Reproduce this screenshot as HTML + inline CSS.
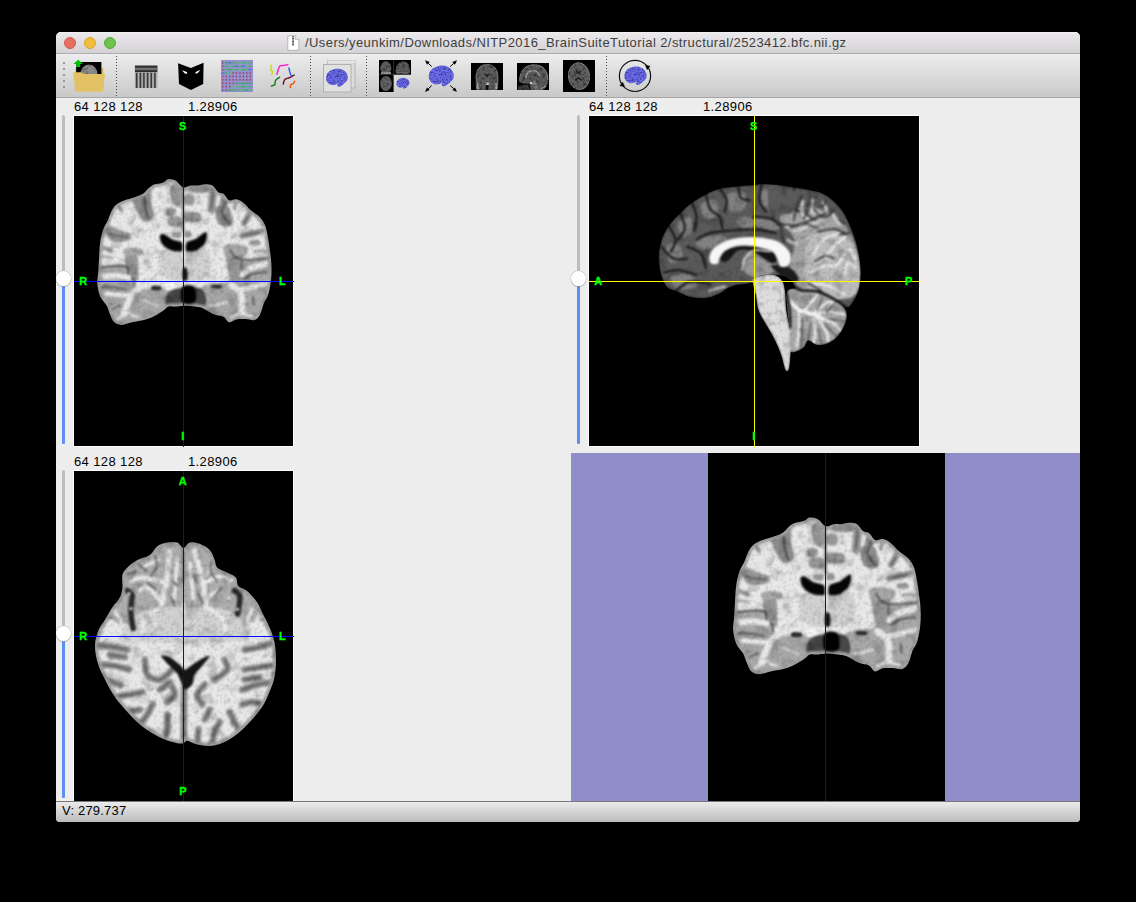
<!DOCTYPE html>
<html><head><meta charset="utf-8">
<style>
html,body{margin:0;padding:0;background:#000;}
body{width:1136px;height:902px;position:relative;overflow:hidden;font-family:"Liberation Sans",sans-serif;font-size:13px;color:#000;}
.abs{position:absolute;}
#win{position:absolute;left:56px;top:32px;width:1024px;height:790px;background:#ededed;border-radius:5px 5px 4px 4px;overflow:hidden;}
#title{position:absolute;left:0;top:0;width:1024px;height:21px;background:linear-gradient(#f4f3f4 0px,#eae8ea 1.5px,#d4d2d4 100%);border-bottom:1px solid #adadad;}
.tl{position:absolute;top:5px;width:12px;height:12px;border-radius:50%;box-sizing:border-box;}
#ttext{position:absolute;left:249px;top:3px;font-size:13px;line-height:15px;color:#3e3e3e;white-space:nowrap;letter-spacing:0.413px;}
#tool{position:absolute;left:0;top:22px;width:1024px;height:43px;background:linear-gradient(#f0f0f0 0px,#ebebeb 2px,#c9c9c9 100%);border-bottom:1px solid #a6a6a6;}
#status{position:absolute;left:0;top:769px;width:1024px;height:21px;background:linear-gradient(#ebebeb,#b9b9b9);border-top:1px solid #777;}
.lbl{position:absolute;font-size:13px;line-height:15px;white-space:nowrap;letter-spacing:0.38px;}
.img{position:absolute;background:#000;}
.groove{position:absolute;width:3px;border-radius:1.5px;background:#bdbdbd;}
.fill{position:absolute;width:3px;border-radius:1.5px;background:#5b8ff0;}
.knob{position:absolute;width:15px;height:15px;border-radius:50%;background:#fff;box-shadow:0 0 0 0.5px #bbb,0 1px 1px rgba(0,0,0,.25);}
.ov{position:absolute;overflow:visible}
.ov text{font-family:"Liberation Sans",sans-serif;font-weight:bold;font-size:11px;fill:#00ff00;stroke:#00ff00;stroke-width:0.3px}
.img{box-shadow:0 0 0 1px #fff;}
</style></head><body>
<svg width="0" height="0" style="position:absolute"><defs>
<filter id="bl" x="-5%" y="-5%" width="110%" height="110%" color-interpolation-filters="sRGB"><feGaussianBlur stdDeviation="0.9" result="b"/><feTurbulence type="fractalNoise" baseFrequency="0.3" numOctaves="2" seed="4" result="n"/><feColorMatrix in="n" type="matrix" values="0.3 0 0 0 0.84  0.3 0 0 0 0.84  0.3 0 0 0 0.84  0 0 0 0 1" result="m"/><feComposite in="b" in2="m" operator="arithmetic" k1="1" k2="0" k3="0" k4="0" result="c1"/><feTurbulence type="fractalNoise" baseFrequency="0.09" numOctaves="2" seed="11" result="n2"/><feColorMatrix in="n2" type="matrix" values="0.55 0 0 0 0.72  0.55 0 0 0 0.72  0.55 0 0 0 0.72  0 0 0 0 1" result="m2"/><feComposite in="c1" in2="m2" operator="arithmetic" k1="1" k2="0" k3="0" k4="0"/></filter>
<filter id="bl2" x="-5%" y="-5%" width="110%" height="110%"><feGaussianBlur stdDeviation="0.8"/></filter>
<g id="cor"><clipPath id="cc"><path d="M109.3 71.4C106.8 70.6 104.4 66.3 102.0 65.0C99.5 63.6 96.8 62.9 94.6 63.1C92.5 63.4 91.6 65.5 89.2 66.4C86.7 67.4 82.4 67.7 80.0 68.6C77.6 69.6 76.4 70.8 74.5 72.3C72.7 73.8 71.5 76.3 69.0 77.8C66.6 79.3 62.9 80.4 59.9 81.4C56.8 82.5 53.5 83.1 50.7 84.2C48.0 85.2 45.6 86.2 43.4 87.8C41.3 89.5 39.6 91.3 37.9 94.2C36.3 97.1 34.9 101.9 33.4 105.2C31.8 108.6 30.0 110.7 28.8 114.4C27.6 118.0 26.7 122.6 26.1 127.2C25.4 131.7 25.4 136.9 25.1 141.8C24.8 146.7 24.5 152.1 24.2 156.4C23.9 160.7 23.0 163.4 23.3 167.4C23.6 171.3 24.5 176.5 26.1 180.2C27.6 183.8 30.8 186.3 32.5 189.3C34.1 192.4 34.9 195.7 36.1 198.5C37.3 201.2 37.9 204.1 39.8 205.8C41.6 207.5 44.0 208.8 47.1 208.9C50.1 209.0 54.4 206.9 58.1 206.2C61.7 205.4 65.4 205.3 69.0 204.3C72.7 203.4 76.7 201.9 80.0 200.3C83.4 198.7 86.7 196.4 89.2 194.8C91.6 193.2 92.5 191.3 94.6 190.6C96.8 189.9 99.5 190.8 102.0 190.6C104.4 190.5 106.5 189.8 109.3 189.7C112.0 189.6 115.7 190.0 118.4 190.2C121.2 190.5 123.6 190.6 125.7 191.2C127.9 191.7 128.8 192.1 131.2 193.4C133.7 194.6 137.3 197.3 140.4 198.5C143.4 199.7 147.1 199.4 149.5 200.7C151.9 202.0 152.9 205.7 155.0 206.2C157.1 206.6 159.6 203.9 162.3 203.4C165.0 202.9 168.4 203.0 171.4 203.0C174.5 203.1 178.2 204.7 180.6 204.0C183.0 203.2 184.6 201.2 186.1 198.5C187.6 195.7 188.4 190.9 189.7 187.5C191.1 184.2 193.1 182.3 194.3 178.4C195.5 174.4 196.5 168.6 197.1 163.7C197.6 158.9 197.6 153.7 197.4 149.1C197.3 144.5 196.7 140.6 196.1 136.3C195.6 132.0 195.1 127.8 194.3 123.5C193.5 119.2 192.9 114.4 191.6 110.7C190.2 107.0 188.5 104.3 186.1 101.5C183.6 98.8 179.7 96.7 176.9 94.2C174.2 91.8 172.1 88.7 169.6 86.9C167.2 85.1 164.7 83.7 162.3 83.3C159.9 82.8 157.1 85.1 155.0 84.2C152.9 83.3 151.3 79.1 149.5 77.8C147.7 76.4 145.8 77.3 144.0 75.9C142.2 74.6 140.7 70.8 138.5 69.5C136.4 68.3 133.7 68.3 131.2 68.3C128.8 68.3 126.3 69.3 123.9 69.5C121.5 69.8 119.0 69.2 116.6 69.5C114.1 69.8 111.7 72.1 109.3 71.4Z"/></clipPath>
<g clip-path="url(#cc)" filter="url(#bl)">
<path d="M109.3 71.4C106.8 70.6 104.4 66.3 102.0 65.0C99.5 63.6 96.8 62.9 94.6 63.1C92.5 63.4 91.6 65.5 89.2 66.4C86.7 67.4 82.4 67.7 80.0 68.6C77.6 69.6 76.4 70.8 74.5 72.3C72.7 73.8 71.5 76.3 69.0 77.8C66.6 79.3 62.9 80.4 59.9 81.4C56.8 82.5 53.5 83.1 50.7 84.2C48.0 85.2 45.6 86.2 43.4 87.8C41.3 89.5 39.6 91.3 37.9 94.2C36.3 97.1 34.9 101.9 33.4 105.2C31.8 108.6 30.0 110.7 28.8 114.4C27.6 118.0 26.7 122.6 26.1 127.2C25.4 131.7 25.4 136.9 25.1 141.8C24.8 146.7 24.5 152.1 24.2 156.4C23.9 160.7 23.0 163.4 23.3 167.4C23.6 171.3 24.5 176.5 26.1 180.2C27.6 183.8 30.8 186.3 32.5 189.3C34.1 192.4 34.9 195.7 36.1 198.5C37.3 201.2 37.9 204.1 39.8 205.8C41.6 207.5 44.0 208.8 47.1 208.9C50.1 209.0 54.4 206.9 58.1 206.2C61.7 205.4 65.4 205.3 69.0 204.3C72.7 203.4 76.7 201.9 80.0 200.3C83.4 198.7 86.7 196.4 89.2 194.8C91.6 193.2 92.5 191.3 94.6 190.6C96.8 189.9 99.5 190.8 102.0 190.6C104.4 190.5 106.5 189.8 109.3 189.7C112.0 189.6 115.7 190.0 118.4 190.2C121.2 190.5 123.6 190.6 125.7 191.2C127.9 191.7 128.8 192.1 131.2 193.4C133.7 194.6 137.3 197.3 140.4 198.5C143.4 199.7 147.1 199.4 149.5 200.7C151.9 202.0 152.9 205.7 155.0 206.2C157.1 206.6 159.6 203.9 162.3 203.4C165.0 202.9 168.4 203.0 171.4 203.0C174.5 203.1 178.2 204.7 180.6 204.0C183.0 203.2 184.6 201.2 186.1 198.5C187.6 195.7 188.4 190.9 189.7 187.5C191.1 184.2 193.1 182.3 194.3 178.4C195.5 174.4 196.5 168.6 197.1 163.7C197.6 158.9 197.6 153.7 197.4 149.1C197.3 144.5 196.7 140.6 196.1 136.3C195.6 132.0 195.1 127.8 194.3 123.5C193.5 119.2 192.9 114.4 191.6 110.7C190.2 107.0 188.5 104.3 186.1 101.5C183.6 98.8 179.7 96.7 176.9 94.2C174.2 91.8 172.1 88.7 169.6 86.9C167.2 85.1 164.7 83.7 162.3 83.3C159.9 82.8 157.1 85.1 155.0 84.2C152.9 83.3 151.3 79.1 149.5 77.8C147.7 76.4 145.8 77.3 144.0 75.9C142.2 74.6 140.7 70.8 138.5 69.5C136.4 68.3 133.7 68.3 131.2 68.3C128.8 68.3 126.3 69.3 123.9 69.5C121.5 69.8 119.0 69.2 116.6 69.5C114.1 69.8 111.7 72.1 109.3 71.4Z" fill="#e8e8e8"/>
<path d="M88.2 134.5C91.9 131.4 104.1 129.9 107.4 134.5C110.8 139.0 110.2 157.0 108.4 161.9C106.5 166.8 100.3 165.3 96.5 163.7C92.7 162.2 86.9 157.6 85.5 152.8C84.1 147.9 84.6 137.5 88.2 134.5Z" fill="#d2d2d2"/>
<path d="M112.9 134.5C116.3 129.9 129.1 131.4 133.0 134.5C137.0 137.5 137.9 147.9 136.7 152.8C135.5 157.6 129.7 162.2 125.7 163.7C121.8 165.3 115.1 166.8 112.9 161.9C110.8 157.0 109.6 139.0 112.9 134.5Z" fill="#d2d2d2"/>
<path d="M24.6 151.7C29.3 149.3 45.8 149.4 51.1 150.9C56.4 152.4 54.3 157.2 56.4 160.6C58.5 164.0 61.8 169.2 63.5 171.2C65.3 173.3 61.7 172.8 67.0 173.1C72.3 173.4 90.3 171.3 95.4 173.1C100.4 174.8 97.8 180.6 97.2 183.7C96.6 186.7 94.2 188.6 91.9 191.5C89.5 194.5 86.1 198.7 83.1 201.4C80.2 204.1 78.6 206.3 74.2 207.6C69.7 208.9 62.0 209.1 56.4 209.3C50.8 209.4 44.2 210.7 40.5 208.5C36.8 206.3 36.7 200.9 34.3 196.1C31.9 191.3 28.2 185.2 26.2 180.0C24.3 174.8 23.0 169.7 22.8 165.0C22.5 160.3 19.9 154.0 24.6 151.7Z" fill="#a8a8a8"/>
<path d="M155.9 165.0C161.7 161.9 160.0 156.1 162.3 152.8C164.7 149.4 164.3 146.5 170.0 144.9C175.7 143.2 192.0 138.8 196.7 142.9C201.4 147.0 198.6 162.0 198.0 169.4C197.4 176.8 194.7 182.1 193.0 187.1C191.3 192.2 190.1 196.6 187.7 199.6C185.4 202.5 183.4 204.1 178.9 204.9C174.5 205.6 165.4 203.5 161.2 204.0C157.1 204.4 157.8 208.7 154.1 207.6C150.4 206.6 143.3 200.5 139.1 197.7C134.8 194.9 130.4 195.2 128.5 190.8C126.6 186.4 123.0 175.5 127.6 171.2C132.1 166.9 150.1 168.1 155.9 165.0Z" fill="#a8a8a8"/>
<path d="M51.7 139.2C53.3 136.8 60.6 136.5 62.6 138.5C64.7 140.4 63.7 146.7 63.9 150.9C64.1 155.1 65.0 161.6 63.9 163.7C62.8 165.9 59.0 165.6 57.1 163.7C55.3 161.9 53.5 156.8 52.6 152.8C51.7 148.7 50.0 141.6 51.7 139.2Z" fill="#969696"/>
<path d="M151.7 130.8C154.1 128.1 164.9 129.6 167.8 132.6C170.7 135.7 169.3 143.9 169.3 149.1C169.3 154.3 169.9 161.1 167.8 163.7C165.7 166.3 159.3 167.1 156.8 164.6C154.4 162.2 154.0 154.7 153.2 149.1C152.3 143.5 149.3 133.6 151.7 130.8Z" fill="#969696"/>
<path d="M51.1 132.6C53.8 131.6 64.4 131.6 67.0 132.6C69.7 133.7 69.7 137.8 67.0 138.9C64.4 139.9 53.8 139.9 51.1 138.9C48.5 137.8 48.5 133.7 51.1 132.6Z" fill="#a8a8a8"/>
<path d="M151.3 129.0C154.6 127.5 168.5 128.3 171.8 129.9C175.2 131.5 174.7 137.4 171.4 138.9C168.2 140.4 155.6 140.5 152.2 138.9C148.9 137.2 148.1 130.5 151.3 129.0Z" fill="#a8a8a8"/>
<path d="M57.7 81.4C58.8 79.1 63.2 76.0 66.3 74.5C69.3 73.0 74.2 70.4 76.0 72.3C77.8 74.1 76.7 80.7 77.3 85.6C77.9 90.6 80.8 98.6 79.6 101.9C78.5 105.2 72.8 106.4 70.1 105.6C67.5 104.8 65.6 100.0 63.9 97.2C62.2 94.4 60.9 91.4 59.9 88.7C58.9 86.1 56.6 83.8 57.7 81.4Z" fill="#8c8c8c"/>
<path d="M70.1 75.9C70.3 78.4 70.6 86.2 71.2 90.6C71.9 95.0 73.7 100.3 74.2 102.3" fill="none" stroke="#484848" stroke-width="2" stroke-linecap="round" stroke-linejoin="round"/>
<path d="M32.8 108.9C34.8 108.2 39.5 111.3 43.4 112.9C47.4 114.5 54.7 116.5 56.6 118.4C58.5 120.3 57.8 123.1 54.8 124.2C51.7 125.4 42.2 126.5 38.3 125.3C34.5 124.1 32.6 119.8 31.7 117.1C30.8 114.4 30.9 109.6 32.8 108.9Z" fill="#969696"/>
<path d="M35.2 118.0C36.9 118.4 42.2 119.7 45.3 120.2C48.3 120.7 52.1 120.7 53.5 120.8" fill="none" stroke="#484848" stroke-width="1.3" stroke-linecap="round" stroke-linejoin="round"/>
<path d="M97.4 69.5C99.0 68.0 104.4 65.4 106.0 68.6C107.6 71.8 108.1 85.5 106.9 88.7C105.7 91.9 100.4 89.7 98.7 87.8C96.9 86.0 96.7 80.8 96.5 77.8C96.3 74.7 95.8 71.1 97.4 69.5Z" fill="#969696"/>
<path d="M91.9 93.3C93.1 92.0 98.5 91.1 100.1 92.0C101.7 93.0 102.6 97.5 101.4 98.8C100.2 100.1 94.4 100.6 92.8 99.7C91.2 98.8 90.7 94.6 91.9 93.3Z" fill="#969696"/>
<path d="M94.6 101.9C96.5 100.4 104.3 99.4 106.3 100.8C108.4 102.2 108.8 108.8 106.9 110.3C105.0 111.8 97.0 111.2 95.0 109.8C93.0 108.4 92.7 103.4 94.6 101.9Z" fill="#969696"/>
<path d="M99.0 116.5C100.2 115.7 105.3 115.4 106.5 116.2C107.8 117.0 107.7 120.5 106.5 121.3C105.3 122.1 100.6 121.9 99.4 121.1C98.1 120.3 97.8 117.4 99.0 116.5Z" fill="#969696"/>
<path d="M43.4 88.7C44.1 89.7 46.8 93.6 47.5 94.6" fill="none" stroke="#969696" stroke-width="3.5" stroke-linecap="round" stroke-linejoin="round"/>
<path d="M27.0 130.8C28.6 131.4 35.4 133.9 37.0 134.5" fill="none" stroke="#969696" stroke-width="4" stroke-linecap="round" stroke-linejoin="round"/>
<path d="M27.0 140.0C28.8 140.3 36.1 141.5 37.9 141.8" fill="none" stroke="#b0b0b0" stroke-width="3" stroke-linecap="round" stroke-linejoin="round"/>
<path d="M115.7 68.6C119.2 67.4 134.4 67.8 138.2 69.0C141.9 70.2 141.7 74.5 138.2 75.8C134.6 77.0 120.5 77.5 116.8 76.3C113.0 75.1 112.1 69.8 115.7 68.6Z" fill="#969696"/>
<path d="M110.7 79.4C112.2 78.0 118.0 78.0 119.5 79.4C121.0 80.9 121.0 86.7 119.5 88.2C118.0 89.7 112.2 89.7 110.7 88.2C109.3 86.7 109.3 80.9 110.7 79.4Z" fill="#969696"/>
<path d="M110.7 96.2C113.2 94.9 123.3 95.5 125.7 97.0C128.2 98.4 127.9 103.7 125.4 105.0C122.9 106.4 113.2 106.5 110.7 105.0C108.3 103.6 108.2 97.6 110.7 96.2Z" fill="#969696"/>
<path d="M110.7 115.6C111.7 114.7 115.8 114.7 116.8 115.6C117.8 116.5 117.8 120.2 116.8 121.1C115.8 122.0 111.7 122.0 110.7 121.1C109.7 120.2 109.7 116.5 110.7 115.6Z" fill="#969696"/>
<path d="M139.1 74.1C138.9 75.8 138.5 81.0 138.2 84.2C137.9 87.4 137.4 91.8 137.3 93.3" fill="none" stroke="#969696" stroke-width="8" stroke-linecap="round" stroke-linejoin="round"/>
<path d="M139.1 75.0C138.9 76.6 138.5 81.2 138.2 84.2C137.9 87.1 137.4 91.2 137.3 92.6" fill="none" stroke="#484848" stroke-width="1.3" stroke-linecap="round" stroke-linejoin="round"/>
<path d="M152.8 77.8C152.2 79.6 150.3 85.7 149.5 88.7C148.7 91.8 148.1 95.0 147.9 96.2" fill="none" stroke="#969696" stroke-width="8" stroke-linecap="round" stroke-linejoin="round"/>
<path d="M142.2 91.5C144.0 89.4 150.5 88.0 153.2 89.7C155.8 91.3 157.5 98.2 158.3 101.5C159.0 104.9 159.7 108.5 157.7 109.8C155.8 111.1 149.4 110.5 146.8 109.2C144.2 107.9 143.0 104.9 142.2 101.9C141.4 99.0 140.4 93.5 142.2 91.5Z" fill="#8c8c8c"/>
<path d="M153.2 80.5C152.6 82.0 150.7 86.9 149.9 89.7C149.0 92.4 147.2 94.1 148.0 97.0C148.9 99.9 153.8 105.4 155.0 107.0" fill="none" stroke="#484848" stroke-width="1.4" stroke-linecap="round" stroke-linejoin="round"/>
<path d="M175.1 98.8C174.3 100.2 170.8 106.0 170.0 107.4" fill="none" stroke="#969696" stroke-width="6" stroke-linecap="round" stroke-linejoin="round"/>
<path d="M174.4 100.6C173.6 101.7 170.7 105.8 170.0 106.9" fill="none" stroke="#484848" stroke-width="1.2" stroke-linecap="round" stroke-linejoin="round"/>
<path d="M187.0 115.4C185.3 115.9 180.1 117.2 176.9 118.0C173.8 118.8 169.6 119.7 168.2 120.0" fill="none" stroke="#969696" stroke-width="6" stroke-linecap="round" stroke-linejoin="round"/>
<path d="M185.2 116.2C182.7 116.7 173.0 118.9 170.5 119.5" fill="none" stroke="#484848" stroke-width="1.1" stroke-linecap="round" stroke-linejoin="round"/>
<path d="M176.2 124.6C177.7 123.9 183.7 123.9 185.2 124.6C186.7 125.3 186.7 128.3 185.2 129.0C183.7 129.7 177.7 129.7 176.2 129.0C174.7 128.3 174.7 125.3 176.2 124.6Z" fill="#969696"/>
<path d="M162.3 83.3C162.0 84.8 160.8 90.9 160.5 92.4" fill="none" stroke="#969696" stroke-width="3.5" stroke-linecap="round" stroke-linejoin="round"/>
<path d="M190.7 134.5C189.0 134.6 182.3 135.2 180.6 135.4" fill="none" stroke="#b0b0b0" stroke-width="3" stroke-linecap="round" stroke-linejoin="round"/>
<path d="M109.3 71.4C109.2 74.6 109.1 83.3 109.1 90.6C109.1 97.9 109.2 111.2 109.3 115.3" fill="none" stroke="#484848" stroke-width="1.5" stroke-linecap="round" stroke-linejoin="round"/>
<path d="M26.2 150.9C30.4 150.8 46.4 148.7 51.1 150.0C55.9 151.3 53.3 156.6 54.8 158.8C56.3 161.0 59.2 161.4 60.1 163.2C61.0 164.9 60.1 168.4 60.1 169.4" fill="none" stroke="#484848" stroke-width="1.6" stroke-linecap="round" stroke-linejoin="round"/>
<path d="M155.9 133.9C156.8 135.1 158.9 139.4 161.2 141.1C163.6 142.7 164.1 143.6 170.0 143.8C175.9 143.9 192.2 142.3 196.7 142.0" fill="none" stroke="#484848" stroke-width="1.6" stroke-linecap="round" stroke-linejoin="round"/>
<path d="M167.8 145.4C167.7 146.7 167.5 151.5 167.4 152.8" fill="none" stroke="#484848" stroke-width="1.4" stroke-linecap="round" stroke-linejoin="round"/>
<path d="M65.4 171.2C64.2 172.4 60.2 175.7 58.2 178.4C56.3 181.0 55.2 183.9 53.9 187.1C52.5 190.4 50.8 196.0 50.2 197.7" fill="none" stroke="#e8e8e8" stroke-width="6.5" stroke-linecap="round" stroke-linejoin="round"/>
<path d="M56.4 180.0C54.2 179.7 47.4 178.8 43.2 178.4C39.1 177.9 33.6 177.6 31.7 177.4" fill="none" stroke="#e8e8e8" stroke-width="4.5" stroke-linecap="round" stroke-linejoin="round"/>
<path d="M54.8 161.5C52.9 161.2 47.4 159.9 43.2 159.7C39.1 159.6 32.1 160.5 29.9 160.6" fill="none" stroke="#e8e8e8" stroke-width="5.5" stroke-linecap="round" stroke-linejoin="round"/>
<path d="M50.2 197.7C49.0 198.8 44.4 202.9 43.2 204.0" fill="none" stroke="#e8e8e8" stroke-width="3" stroke-linecap="round" stroke-linejoin="round"/>
<path d="M54.8 196.1C55.8 196.8 58.2 199.2 60.8 200.5C63.5 201.8 69.0 203.4 70.7 204.0" fill="none" stroke="#e8e8e8" stroke-width="3" stroke-linecap="round" stroke-linejoin="round"/>
<path d="M65.4 183.7C67.5 184.2 74.6 185.8 77.8 187.1C81.0 188.4 83.6 190.8 84.8 191.5" fill="none" stroke="#dcdcdc" stroke-width="1.6" stroke-linecap="round" stroke-linejoin="round"/>
<path d="M27.0 171.0C29.1 171.0 35.5 170.6 39.8 171.0C44.0 171.5 50.4 173.3 52.6 173.8" fill="none" stroke="#484848" stroke-width="1.2" stroke-linecap="round" stroke-linejoin="round"/>
<path d="M37.9 193.0C39.5 192.4 45.6 189.9 47.1 189.3" fill="none" stroke="#484848" stroke-width="1.2" stroke-linecap="round" stroke-linejoin="round"/>
<path d="M77.8 170.3C79.3 169.7 85.1 169.7 86.6 170.3C88.1 170.9 88.1 173.4 86.6 174.0C85.1 174.6 79.3 174.6 77.8 174.0C76.4 173.4 76.4 170.9 77.8 170.3Z" fill="#2a2a2a"/>
<path d="M168.3 158.8C169.5 157.8 172.1 154.2 175.3 152.6C178.5 151.0 184.5 150.0 187.7 149.1C191.0 148.2 193.7 147.6 194.9 147.3" fill="none" stroke="#e8e8e8" stroke-width="5.5" stroke-linecap="round" stroke-linejoin="round"/>
<path d="M170.0 163.2C171.5 162.3 175.2 159.0 178.9 157.9C182.7 156.7 190.1 156.5 192.3 156.2" fill="none" stroke="#484848" stroke-width="1.5" stroke-linecap="round" stroke-linejoin="round"/>
<path d="M157.6 169.4C158.7 170.3 162.9 172.3 164.7 174.7C166.5 177.1 167.9 180.1 168.3 183.7C168.8 187.2 167.6 194.0 167.4 196.1" fill="none" stroke="#e8e8e8" stroke-width="6.5" stroke-linecap="round" stroke-linejoin="round"/>
<path d="M164.7 174.0C167.1 173.5 174.2 172.3 178.9 171.2C183.7 170.2 190.7 168.3 193.0 167.8" fill="none" stroke="#e8e8e8" stroke-width="4.8" stroke-linecap="round" stroke-linejoin="round"/>
<path d="M167.4 196.1C165.8 197.0 159.2 200.5 157.6 201.4" fill="none" stroke="#e8e8e8" stroke-width="3" stroke-linecap="round" stroke-linejoin="round"/>
<path d="M170.0 197.7C171.5 198.4 177.5 200.8 178.9 201.4" fill="none" stroke="#e8e8e8" stroke-width="3" stroke-linecap="round" stroke-linejoin="round"/>
<path d="M178.9 180.9C179.1 182.3 179.7 187.6 179.9 189.0" fill="none" stroke="#484848" stroke-width="1.5" stroke-linecap="round" stroke-linejoin="round"/>
<path d="M135.8 189.7C137.2 189.5 141.1 189.3 144.0 188.6C146.9 187.9 151.6 186.2 153.2 185.7" fill="none" stroke="#e0e0e0" stroke-width="2.4" stroke-linecap="round" stroke-linejoin="round"/>
<path d="M138.2 169.4C139.6 168.9 145.5 168.9 146.9 169.4C148.4 169.9 148.4 171.7 146.9 172.1C145.5 172.6 139.6 172.6 138.2 172.1C136.7 171.7 136.7 169.9 138.2 169.4Z" fill="#2a2a2a"/>
<path d="M91.9 166.8C94.3 165.6 103.8 165.6 106.2 166.8C108.5 168.0 108.5 172.8 106.2 174.0C103.8 175.2 94.3 175.2 91.9 174.0C89.5 172.8 89.5 168.0 91.9 166.8Z" fill="#f6f6f6"/>
<path d="M112.9 166.8C115.1 165.8 123.6 165.8 125.7 166.8C127.9 167.8 127.9 171.9 125.7 172.9C123.6 173.9 115.1 173.9 112.9 172.9C110.8 171.9 110.8 167.8 112.9 166.8Z" fill="#f0f0f0"/>
<path d="M96.5 174.7C102.0 171.3 122.2 169.8 127.6 172.9C132.9 175.9 134.0 189.6 128.5 193.0C123.0 196.3 100.0 196.0 94.6 193.0C89.3 189.9 91.0 178.1 96.5 174.7Z" fill="#484848"/>
<path d="M109.3 71.4C106.8 70.6 104.4 66.3 102.0 65.0C99.5 63.6 96.8 62.9 94.6 63.1C92.5 63.4 91.6 65.5 89.2 66.4C86.7 67.4 82.4 67.7 80.0 68.6C77.6 69.6 76.4 70.8 74.5 72.3C72.7 73.8 71.5 76.3 69.0 77.8C66.6 79.3 62.9 80.4 59.9 81.4C56.8 82.5 53.5 83.1 50.7 84.2C48.0 85.2 45.6 86.2 43.4 87.8C41.3 89.5 39.6 91.3 37.9 94.2C36.3 97.1 34.9 101.9 33.4 105.2C31.8 108.6 30.0 110.7 28.8 114.4C27.6 118.0 26.7 122.6 26.1 127.2C25.4 131.7 25.4 136.9 25.1 141.8C24.8 146.7 24.5 152.1 24.2 156.4C23.9 160.7 23.0 163.4 23.3 167.4C23.6 171.3 24.5 176.5 26.1 180.2C27.6 183.8 30.8 186.3 32.5 189.3C34.1 192.4 34.9 195.7 36.1 198.5C37.3 201.2 37.9 204.1 39.8 205.8C41.6 207.5 44.0 208.8 47.1 208.9C50.1 209.0 54.4 206.9 58.1 206.2C61.7 205.4 65.4 205.3 69.0 204.3C72.7 203.4 76.7 201.9 80.0 200.3C83.4 198.7 86.7 196.4 89.2 194.8C91.6 193.2 92.5 191.3 94.6 190.6C96.8 189.9 99.5 190.8 102.0 190.6C104.4 190.5 106.5 189.8 109.3 189.7C112.0 189.6 115.7 190.0 118.4 190.2C121.2 190.5 123.6 190.6 125.7 191.2C127.9 191.7 128.8 192.1 131.2 193.4C133.7 194.6 137.3 197.3 140.4 198.5C143.4 199.7 147.1 199.4 149.5 200.7C151.9 202.0 152.9 205.7 155.0 206.2C157.1 206.6 159.6 203.9 162.3 203.4C165.0 202.9 168.4 203.0 171.4 203.0C174.5 203.1 178.2 204.7 180.6 204.0C183.0 203.2 184.6 201.2 186.1 198.5C187.6 195.7 188.4 190.9 189.7 187.5C191.1 184.2 193.1 182.3 194.3 178.4C195.5 174.4 196.5 168.6 197.1 163.7C197.6 158.9 197.6 153.7 197.4 149.1C197.3 144.5 196.7 140.6 196.1 136.3C195.6 132.0 195.1 127.8 194.3 123.5C193.5 119.2 192.9 114.4 191.6 110.7C190.2 107.0 188.5 104.3 186.1 101.5C183.6 98.8 179.7 96.7 176.9 94.2C174.2 91.8 172.1 88.7 169.6 86.9C167.2 85.1 164.7 83.7 162.3 83.3C159.9 82.8 157.1 85.1 155.0 84.2C152.9 83.3 151.3 79.1 149.5 77.8C147.7 76.4 145.8 77.3 144.0 75.9C142.2 74.6 140.7 70.8 138.5 69.5C136.4 68.3 133.7 68.3 131.2 68.3C128.8 68.3 126.3 69.3 123.9 69.5C121.5 69.8 119.0 69.2 116.6 69.5C114.1 69.8 111.7 72.1 109.3 71.4Z" fill="none" stroke="#a2a2a2" stroke-width="6"/>
<path d="M86.0 119.1C86.3 118.4 88.3 117.6 89.5 118.0C90.7 118.4 96.5 122.7 98.3 123.5C100.1 124.3 106.8 125.3 107.8 126.4C108.8 127.6 108.9 134.4 108.0 135.2C107.0 136.0 100.0 135.3 98.3 134.8C96.6 134.4 91.8 131.8 90.6 130.8C89.4 129.9 87.0 126.5 86.6 125.3C86.1 124.2 85.8 119.8 86.0 119.1Z" fill="#050505"/>
<path d="M132.7 116.2C132.3 115.7 130.4 116.6 129.4 117.3C128.3 117.9 123.8 121.8 122.1 122.8C120.4 123.7 113.5 125.2 112.6 126.4C111.6 127.7 111.4 134.4 112.4 135.2C113.3 136.0 120.3 135.5 122.1 134.8C123.8 134.2 128.7 130.2 129.8 129.0C130.8 127.7 132.4 123.7 132.7 122.4C133.0 121.1 133.0 116.7 132.7 116.2Z" fill="#050505"/>
<path d="M108.9 152.8C109.6 150.9 112.2 150.9 112.9 152.8C113.7 154.6 114.0 161.9 113.3 163.7C112.6 165.6 109.6 165.6 108.9 163.7C108.2 161.9 108.2 154.6 108.9 152.8Z" fill="#111"/>
<path d="M108.4 171.0C110.3 168.5 118.1 168.6 120.2 171.0C122.4 173.5 123.1 183.1 121.2 185.7C119.2 188.3 110.5 189.0 108.4 186.6C106.2 184.2 106.4 173.6 108.4 171.0Z" fill="#000"/>
</g></g>
<g id="axi"><clipPath id="ca"><path d="M109.5 77.0C111.6 77.0 113.0 72.2 115.7 71.5C118.4 70.8 122.4 71.5 125.7 72.7C129.0 74.0 133.2 76.2 135.7 79.0C138.2 81.7 139.4 86.0 140.7 88.9C141.9 91.8 141.1 94.3 143.2 96.4C145.2 98.5 150.0 99.7 153.1 101.4C156.3 103.1 160.0 104.1 161.9 106.4C163.7 108.7 162.5 112.8 164.4 115.1C166.2 117.4 170.0 117.4 173.1 120.1C176.2 122.8 180.4 127.4 183.1 131.3C185.8 135.3 187.2 139.6 189.3 143.8C191.4 147.9 193.7 151.7 195.5 156.3C197.4 160.8 199.4 165.8 200.5 171.2C201.6 176.6 202.0 182.9 202.0 188.7C202.0 194.5 201.6 200.7 200.5 206.1C199.4 211.5 197.6 216.1 195.5 221.1C193.5 226.1 191.0 231.5 188.1 236.1C185.1 240.6 181.8 244.4 178.1 248.5C174.3 252.7 169.8 257.5 165.6 261.0C161.5 264.5 157.7 267.4 153.1 269.7C148.6 272.0 143.2 274.1 138.2 274.7C133.2 275.3 127.4 274.3 123.2 273.5C119.1 272.6 115.5 269.9 113.2 269.7C111.0 269.5 111.2 271.8 109.5 272.2C107.8 272.6 106.4 272.8 103.3 272.2C100.2 271.6 95.0 270.1 90.8 268.5C86.6 266.8 82.5 264.7 78.3 262.2C74.2 259.7 70.0 257.0 65.9 253.5C61.7 250.0 57.6 245.6 53.4 241.0C49.2 236.5 44.7 231.5 40.9 226.1C37.2 220.7 33.9 214.4 31.0 208.6C28.0 202.8 25.1 197.0 23.5 191.2C21.8 185.4 20.8 179.1 21.0 173.7C21.2 168.3 23.1 162.9 24.7 158.8C26.4 154.6 28.7 152.5 31.0 148.8C33.2 145.0 35.9 140.0 38.4 136.3C40.9 132.6 44.3 129.7 45.9 126.3C47.6 123.0 48.0 120.1 48.4 116.4C48.8 112.6 47.6 107.2 48.4 103.9C49.2 100.6 50.9 98.9 53.4 96.4C55.9 93.9 59.6 91.0 63.4 88.9C67.1 86.8 72.5 86.2 75.8 83.9C79.2 81.7 80.4 77.3 83.3 75.2C86.2 73.1 90.0 72.1 93.3 71.5C96.6 70.8 100.6 70.6 103.3 71.5C106.0 72.4 107.4 77.0 109.5 77.0Z"/></clipPath>
<g clip-path="url(#ca)" filter="url(#bl)">
<path d="M109.5 77.0C111.6 77.0 113.0 72.2 115.7 71.5C118.4 70.8 122.4 71.5 125.7 72.7C129.0 74.0 133.2 76.2 135.7 79.0C138.2 81.7 139.4 86.0 140.7 88.9C141.9 91.8 141.1 94.3 143.2 96.4C145.2 98.5 150.0 99.7 153.1 101.4C156.3 103.1 160.0 104.1 161.9 106.4C163.7 108.7 162.5 112.8 164.4 115.1C166.2 117.4 170.0 117.4 173.1 120.1C176.2 122.8 180.4 127.4 183.1 131.3C185.8 135.3 187.2 139.6 189.3 143.8C191.4 147.9 193.7 151.7 195.5 156.3C197.4 160.8 199.4 165.8 200.5 171.2C201.6 176.6 202.0 182.9 202.0 188.7C202.0 194.5 201.6 200.7 200.5 206.1C199.4 211.5 197.6 216.1 195.5 221.1C193.5 226.1 191.0 231.5 188.1 236.1C185.1 240.6 181.8 244.4 178.1 248.5C174.3 252.7 169.8 257.5 165.6 261.0C161.5 264.5 157.7 267.4 153.1 269.7C148.6 272.0 143.2 274.1 138.2 274.7C133.2 275.3 127.4 274.3 123.2 273.5C119.1 272.6 115.5 269.9 113.2 269.7C111.0 269.5 111.2 271.8 109.5 272.2C107.8 272.6 106.4 272.8 103.3 272.2C100.2 271.6 95.0 270.1 90.8 268.5C86.6 266.8 82.5 264.7 78.3 262.2C74.2 259.7 70.0 257.0 65.9 253.5C61.7 250.0 57.6 245.6 53.4 241.0C49.2 236.5 44.7 231.5 40.9 226.1C37.2 220.7 33.9 214.4 31.0 208.6C28.0 202.8 25.1 197.0 23.5 191.2C21.8 185.4 20.8 179.1 21.0 173.7C21.2 168.3 23.1 162.9 24.7 158.8C26.4 154.6 28.7 152.5 31.0 148.8C33.2 145.0 35.9 140.0 38.4 136.3C40.9 132.6 44.3 129.7 45.9 126.3C47.6 123.0 48.0 120.1 48.4 116.4C48.8 112.6 47.6 107.2 48.4 103.9C49.2 100.6 50.9 98.9 53.4 96.4C55.9 93.9 59.6 91.0 63.4 88.9C67.1 86.8 72.5 86.2 75.8 83.9C79.2 81.7 80.4 77.3 83.3 75.2C86.2 73.1 90.0 72.1 93.3 71.5C96.6 70.8 100.6 70.6 103.3 71.5C106.0 72.4 107.4 77.0 109.5 77.0Z" fill="#e8e8e8"/>
<path d="M44.8 90.9C50.6 83.5 70.4 75.4 81.2 71.9C92.0 68.5 99.9 70.1 109.4 70.3C118.9 70.6 129.2 68.0 138.3 73.5C147.3 79.1 156.8 94.6 163.6 103.6C170.5 112.6 176.3 120.3 179.5 127.4C182.6 134.5 185.3 142.2 182.6 146.4C180.0 150.6 175.8 154.1 163.6 152.7C151.5 151.4 127.7 138.5 109.7 138.5C91.8 138.5 68.0 151.4 55.9 152.7C43.7 154.1 39.5 150.6 36.8 146.4C34.2 142.2 38.4 132.4 40.0 127.4C41.6 122.4 45.6 122.4 46.4 116.3C47.1 110.2 39.0 98.3 44.8 90.9Z" fill="#aeaeae"/>
<path d="M68.5 140.1C78.1 134.7 95.2 136.1 109.7 136.1C124.3 136.1 145.9 134.7 155.7 140.1C165.5 145.5 185.6 163.8 168.4 168.6C151.2 173.4 69.3 173.4 52.7 168.6C36.1 163.8 59.0 145.5 68.5 140.1Z" fill="#d2d2d2"/>
<path d="M95.5 79.8C95.0 85.1 93.6 102.3 92.3 111.5C91.0 120.8 88.4 131.4 87.6 135.3" fill="none" stroke="#e8e8e8" stroke-width="5.4" stroke-linecap="round" stroke-linejoin="round"/>
<path d="M120.8 79.8C122.2 85.1 126.9 102.3 128.8 111.5C130.6 120.8 131.4 131.4 131.9 135.3" fill="none" stroke="#e8e8e8" stroke-width="5.4" stroke-linecap="round" stroke-linejoin="round"/>
<path d="M103.4 87.8C102.9 94.4 100.8 120.8 100.2 127.4" fill="none" stroke="#e8e8e8" stroke-width="3.8" stroke-linecap="round" stroke-linejoin="round"/>
<path d="M116.1 92.5C116.6 98.3 118.7 121.6 119.3 127.4" fill="none" stroke="#e8e8e8" stroke-width="3.8" stroke-linecap="round" stroke-linejoin="round"/>
<path d="M92.3 111.5C88.4 110.8 74.4 107.1 68.5 106.8C62.7 106.5 59.3 109.4 57.5 110.0" fill="none" stroke="#e8e8e8" stroke-width="4.4" stroke-linecap="round" stroke-linejoin="round"/>
<path d="M87.6 130.6C85.2 128.2 77.0 118.1 73.3 116.3C69.6 114.4 66.7 118.9 65.4 119.5" fill="none" stroke="#e8e8e8" stroke-width="4.2" stroke-linecap="round" stroke-linejoin="round"/>
<path d="M130.4 111.5C133.3 110.5 143.3 105.7 147.8 105.2C152.3 104.7 155.7 107.8 157.3 108.4" fill="none" stroke="#e8e8e8" stroke-width="4.4" stroke-linecap="round" stroke-linejoin="round"/>
<path d="M131.9 127.4C134.0 126.1 142.5 120.8 144.6 119.5" fill="none" stroke="#e8e8e8" stroke-width="4" stroke-linecap="round" stroke-linejoin="round"/>
<path d="M68.5 95.7C71.2 94.6 81.8 90.4 84.4 89.4" fill="none" stroke="#e8e8e8" stroke-width="3.4" stroke-linecap="round" stroke-linejoin="round"/>
<path d="M87.6 135.3C84.9 137.2 74.9 142.4 71.7 146.4C68.5 150.4 69.1 157.0 68.5 159.1" fill="none" stroke="#e8e8e8" stroke-width="5" stroke-linecap="round" stroke-linejoin="round"/>
<path d="M131.9 135.3C134.6 137.2 144.6 142.4 147.8 146.4C151.0 150.4 150.4 157.0 151.0 159.1" fill="none" stroke="#e8e8e8" stroke-width="5" stroke-linecap="round" stroke-linejoin="round"/>
<path d="M40.0 138.5C41.3 140.9 47.1 148.3 47.9 152.7C48.7 157.2 45.3 163.3 44.8 165.4" fill="none" stroke="#e8e8e8" stroke-width="3.6" stroke-linecap="round" stroke-linejoin="round"/>
<path d="M177.9 138.5C177.1 140.9 172.9 148.3 173.1 152.7C173.4 157.2 178.4 163.3 179.5 165.4" fill="none" stroke="#e8e8e8" stroke-width="3.6" stroke-linecap="round" stroke-linejoin="round"/>
<path d="M138.3 95.7C137.2 97.3 133.0 103.6 131.9 105.2" fill="none" stroke="#e8e8e8" stroke-width="2.6" stroke-linecap="round" stroke-linejoin="round"/>
<path d="M81.2 84.6C81.5 86.5 83.6 92.3 82.8 95.7C82.0 99.1 77.5 103.6 76.5 105.2" fill="none" stroke="#4a4a4a" stroke-width="1.4" stroke-linecap="round" stroke-linejoin="round"/>
<path d="M63.8 92.5C65.4 93.8 71.7 99.1 73.3 100.5" fill="none" stroke="#4a4a4a" stroke-width="1.4" stroke-linecap="round" stroke-linejoin="round"/>
<path d="M138.3 87.8C138.0 89.9 135.9 96.8 136.7 100.5C137.5 104.1 142.0 108.4 143.0 110.0" fill="none" stroke="#4a4a4a" stroke-width="1.4" stroke-linecap="round" stroke-linejoin="round"/>
<path d="M73.3 111.5C74.6 112.6 79.9 116.8 81.2 117.9" fill="none" stroke="#4a4a4a" stroke-width="1.4" stroke-linecap="round" stroke-linejoin="round"/>
<path d="M147.8 116.3C146.7 117.6 142.5 122.9 141.4 124.2" fill="none" stroke="#4a4a4a" stroke-width="1.4" stroke-linecap="round" stroke-linejoin="round"/>
<path d="M52.7 103.6C54.3 103.1 60.6 101.0 62.2 100.5" fill="none" stroke="#4a4a4a" stroke-width="1.4" stroke-linecap="round" stroke-linejoin="round"/>
<path d="M109.4 73.5C109.4 79.8 109.4 105.2 109.4 111.5" fill="none" stroke="#4a4a4a" stroke-width="1.4" stroke-linecap="round" stroke-linejoin="round"/>
<path d="M30.5 149.6C31.8 149.1 37.1 146.9 38.4 146.4" fill="none" stroke="#4a4a4a" stroke-width="1.4" stroke-linecap="round" stroke-linejoin="round"/>
<path d="M185.8 148.0C187.1 148.8 192.4 152.0 193.7 152.7" fill="none" stroke="#4a4a4a" stroke-width="1.4" stroke-linecap="round" stroke-linejoin="round"/>
<path d="M98.7 110.0C99.4 110.8 102.6 113.9 103.4 114.7" fill="none" stroke="#4a4a4a" stroke-width="1.4" stroke-linecap="round" stroke-linejoin="round"/>
<path d="M119.3 103.6C119.8 104.9 121.9 110.2 122.4 111.5" fill="none" stroke="#4a4a4a" stroke-width="1.4" stroke-linecap="round" stroke-linejoin="round"/>
<path d="M97.1 125.8C97.6 127.1 99.7 132.4 100.2 133.7" fill="none" stroke="#4a4a4a" stroke-width="1.4" stroke-linecap="round" stroke-linejoin="round"/>
<path d="M124.0 122.6C124.8 124.2 128.0 130.6 128.8 132.1" fill="none" stroke="#4a4a4a" stroke-width="1.4" stroke-linecap="round" stroke-linejoin="round"/>
<path d="M52.7 119.5C53.6 120.3 57.6 121.1 58.2 124.2C58.9 127.4 56.5 132.9 56.7 138.5C56.8 144.0 58.6 154.3 59.0 157.5" fill="none" stroke="#2a2a2a" stroke-width="5.5" stroke-linecap="round" stroke-linejoin="round"/>
<path d="M160.5 119.5C161.4 120.5 165.5 121.8 166.0 125.8C166.5 129.8 164.0 140.3 163.6 143.2" fill="none" stroke="#2a2a2a" stroke-width="5.5" stroke-linecap="round" stroke-linejoin="round"/>
<circle cx="55.1" cy="122.6" r="1.4" fill="#ffffff"/>
<circle cx="56.7" cy="137.7" r="1.4" fill="#ffffff"/>
<circle cx="81.2" cy="153.5" r="1.4" fill="#ffffff"/>
<circle cx="154.9" cy="127.4" r="1.4" fill="#ffffff"/>
<circle cx="163.6" cy="138.5" r="1.4" fill="#ffffff"/>
<circle cx="109.7" cy="133.7" r="1.4" fill="#ffffff"/>
<path d="M21.0 173.7C23.9 174.1 33.0 175.4 38.4 176.2C43.8 177.0 50.9 178.3 53.4 178.7" fill="none" stroke="#949494" stroke-width="7" stroke-linecap="round" stroke-linejoin="round"/><path d="M21.0 173.7C23.9 174.1 33.0 175.4 38.4 176.2C43.8 177.0 50.9 178.3 53.4 178.7" fill="none" stroke="#585858" stroke-width="1.6" stroke-linecap="round" stroke-linejoin="round"/>
<path d="M200.5 171.2C198.0 172.1 190.6 175.0 185.6 176.2C180.6 177.5 173.1 178.3 170.6 178.7" fill="none" stroke="#949494" stroke-width="7" stroke-linecap="round" stroke-linejoin="round"/><path d="M200.5 171.2C198.0 172.1 190.6 175.0 185.6 176.2C180.6 177.5 173.1 178.3 170.6 178.7" fill="none" stroke="#585858" stroke-width="1.6" stroke-linecap="round" stroke-linejoin="round"/>
<path d="M24.7 193.7C27.4 193.9 35.9 194.1 40.9 194.9C45.9 195.7 52.4 198.0 54.6 198.7" fill="none" stroke="#949494" stroke-width="7" stroke-linecap="round" stroke-linejoin="round"/><path d="M24.7 193.7C27.4 193.9 35.9 194.1 40.9 194.9C45.9 195.7 52.4 198.0 54.6 198.7" fill="none" stroke="#585858" stroke-width="1.6" stroke-linecap="round" stroke-linejoin="round"/>
<path d="M201.8 193.7C199.1 194.1 190.8 195.3 185.6 196.2C180.4 197.0 173.1 198.2 170.6 198.7" fill="none" stroke="#949494" stroke-width="7" stroke-linecap="round" stroke-linejoin="round"/><path d="M201.8 193.7C199.1 194.1 190.8 195.3 185.6 196.2C180.4 197.0 173.1 198.2 170.6 198.7" fill="none" stroke="#585858" stroke-width="1.6" stroke-linecap="round" stroke-linejoin="round"/>
<path d="M31.0 208.6C33.4 209.5 43.4 212.8 45.9 213.6" fill="none" stroke="#949494" stroke-width="7" stroke-linecap="round" stroke-linejoin="round"/><path d="M31.0 208.6C33.4 209.5 43.4 212.8 45.9 213.6" fill="none" stroke="#585858" stroke-width="1.6" stroke-linecap="round" stroke-linejoin="round"/>
<path d="M199.3 211.1C196.6 211.5 188.3 212.4 183.1 213.6C177.9 214.9 170.6 217.8 168.1 218.6" fill="none" stroke="#949494" stroke-width="7" stroke-linecap="round" stroke-linejoin="round"/><path d="M199.3 211.1C196.6 211.5 188.3 212.4 183.1 213.6C177.9 214.9 170.6 217.8 168.1 218.6" fill="none" stroke="#585858" stroke-width="1.6" stroke-linecap="round" stroke-linejoin="round"/>
<path d="M40.9 226.1C43.4 225.7 51.3 224.4 55.9 223.6C60.5 222.8 66.3 221.5 68.4 221.1" fill="none" stroke="#949494" stroke-width="7" stroke-linecap="round" stroke-linejoin="round"/><path d="M40.9 226.1C43.4 225.7 51.3 224.4 55.9 223.6C60.5 222.8 66.3 221.5 68.4 221.1" fill="none" stroke="#585858" stroke-width="1.6" stroke-linecap="round" stroke-linejoin="round"/>
<path d="M190.6 233.6C188.5 233.1 181.8 231.1 178.1 231.1C174.3 231.1 169.8 233.1 168.1 233.6" fill="none" stroke="#949494" stroke-width="7" stroke-linecap="round" stroke-linejoin="round"/><path d="M190.6 233.6C188.5 233.1 181.8 231.1 178.1 231.1C174.3 231.1 169.8 233.1 168.1 233.6" fill="none" stroke="#585858" stroke-width="1.6" stroke-linecap="round" stroke-linejoin="round"/>
<path d="M53.4 241.0C55.5 240.6 63.8 239.0 65.9 238.6" fill="none" stroke="#949494" stroke-width="7" stroke-linecap="round" stroke-linejoin="round"/><path d="M53.4 241.0C55.5 240.6 63.8 239.0 65.9 238.6" fill="none" stroke="#585858" stroke-width="1.6" stroke-linecap="round" stroke-linejoin="round"/>
<path d="M65.9 253.5C67.1 251.9 71.3 246.9 73.3 243.5C75.4 240.2 77.5 235.2 78.3 233.6" fill="none" stroke="#949494" stroke-width="7" stroke-linecap="round" stroke-linejoin="round"/><path d="M65.9 253.5C67.1 251.9 71.3 246.9 73.3 243.5C75.4 240.2 77.5 235.2 78.3 233.6" fill="none" stroke="#585858" stroke-width="1.6" stroke-linecap="round" stroke-linejoin="round"/>
<path d="M165.6 261.0C164.8 259.3 162.3 254.3 160.6 251.0C159.0 247.7 156.5 242.7 155.6 241.0" fill="none" stroke="#949494" stroke-width="7" stroke-linecap="round" stroke-linejoin="round"/><path d="M165.6 261.0C164.8 259.3 162.3 254.3 160.6 251.0C159.0 247.7 156.5 242.7 155.6 241.0" fill="none" stroke="#585858" stroke-width="1.6" stroke-linecap="round" stroke-linejoin="round"/>
<path d="M90.8 268.5C91.2 266.4 92.9 260.2 93.3 256.0C93.7 251.9 93.3 245.6 93.3 243.5" fill="none" stroke="#949494" stroke-width="7" stroke-linecap="round" stroke-linejoin="round"/><path d="M90.8 268.5C91.2 266.4 92.9 260.2 93.3 256.0C93.7 251.9 93.3 245.6 93.3 243.5" fill="none" stroke="#585858" stroke-width="1.6" stroke-linecap="round" stroke-linejoin="round"/>
<path d="M138.2 274.7C138.6 272.4 139.4 264.9 140.7 261.0C141.9 257.0 144.8 252.7 145.7 251.0" fill="none" stroke="#949494" stroke-width="7" stroke-linecap="round" stroke-linejoin="round"/><path d="M138.2 274.7C138.6 272.4 139.4 264.9 140.7 261.0C141.9 257.0 144.8 252.7 145.7 251.0" fill="none" stroke="#585858" stroke-width="1.6" stroke-linecap="round" stroke-linejoin="round"/>
<path d="M109.5 272.2C109.6 268.3 109.9 257.5 110.0 248.5C110.1 239.6 110.0 223.6 110.0 218.6" fill="none" stroke="#949494" stroke-width="7" stroke-linecap="round" stroke-linejoin="round"/><path d="M109.5 272.2C109.6 268.3 109.9 257.5 110.0 248.5C110.1 239.6 110.0 223.6 110.0 218.6" fill="none" stroke="#585858" stroke-width="1.6" stroke-linecap="round" stroke-linejoin="round"/>
<path d="M123.2 273.5C123.4 271.0 124.3 261.0 124.5 258.5" fill="none" stroke="#949494" stroke-width="7" stroke-linecap="round" stroke-linejoin="round"/><path d="M123.2 273.5C123.4 271.0 124.3 261.0 124.5 258.5" fill="none" stroke="#585858" stroke-width="1.6" stroke-linecap="round" stroke-linejoin="round"/>
<path d="M70.9 188.7C71.3 191.2 70.9 200.3 73.3 203.6C75.8 207.0 81.7 209.5 85.8 208.6C90.0 207.8 96.2 200.3 98.3 198.7" fill="none" stroke="#949494" stroke-width="7" stroke-linecap="round" stroke-linejoin="round"/><path d="M70.9 188.7C71.3 191.2 70.9 200.3 73.3 203.6C75.8 207.0 81.7 209.5 85.8 208.6C90.0 207.8 96.2 200.3 98.3 198.7" fill="none" stroke="#585858" stroke-width="1.6" stroke-linecap="round" stroke-linejoin="round"/>
<path d="M93.3 231.1C94.5 229.8 100.2 226.5 100.8 223.6C101.4 220.7 97.7 215.3 97.0 213.6" fill="none" stroke="#949494" stroke-width="7" stroke-linecap="round" stroke-linejoin="round"/><path d="M93.3 231.1C94.5 229.8 100.2 226.5 100.8 223.6C101.4 220.7 97.7 215.3 97.0 213.6" fill="none" stroke="#585858" stroke-width="1.6" stroke-linecap="round" stroke-linejoin="round"/>
<path d="M128.2 233.6C127.4 231.9 122.8 226.9 123.2 223.6C123.6 220.3 129.5 215.3 130.7 213.6" fill="none" stroke="#949494" stroke-width="7" stroke-linecap="round" stroke-linejoin="round"/><path d="M128.2 233.6C127.4 231.9 122.8 226.9 123.2 223.6C123.6 220.3 129.5 215.3 130.7 213.6" fill="none" stroke="#585858" stroke-width="1.6" stroke-linecap="round" stroke-linejoin="round"/>
<path d="M150.7 188.7C151.1 190.3 154.8 195.3 153.1 198.7C151.5 202.0 142.8 207.0 140.7 208.6" fill="none" stroke="#949494" stroke-width="7" stroke-linecap="round" stroke-linejoin="round"/><path d="M150.7 188.7C151.1 190.3 154.8 195.3 153.1 198.7C151.5 202.0 142.8 207.0 140.7 208.6" fill="none" stroke="#585858" stroke-width="1.6" stroke-linecap="round" stroke-linejoin="round"/>
<path d="M85.8 218.6C87.5 217.4 94.1 212.4 95.8 211.1" fill="none" stroke="#949494" stroke-width="7" stroke-linecap="round" stroke-linejoin="round"/><path d="M85.8 218.6C87.5 217.4 94.1 212.4 95.8 211.1" fill="none" stroke="#585858" stroke-width="1.6" stroke-linecap="round" stroke-linejoin="round"/>
<path d="M130.7 248.5C131.5 246.9 134.9 240.2 135.7 238.6" fill="none" stroke="#949494" stroke-width="7" stroke-linecap="round" stroke-linejoin="round"/><path d="M130.7 248.5C131.5 246.9 134.9 240.2 135.7 238.6" fill="none" stroke="#585858" stroke-width="1.6" stroke-linecap="round" stroke-linejoin="round"/>
<path d="M170.6 208.6C173.1 208.2 183.1 206.5 185.6 206.1" fill="none" stroke="#949494" stroke-width="7" stroke-linecap="round" stroke-linejoin="round"/><path d="M170.6 208.6C173.1 208.2 183.1 206.5 185.6 206.1" fill="none" stroke="#585858" stroke-width="1.6" stroke-linecap="round" stroke-linejoin="round"/>
<path d="M35.9 183.7C38.4 184.1 48.4 185.8 50.9 186.2" fill="none" stroke="#949494" stroke-width="7" stroke-linecap="round" stroke-linejoin="round"/><path d="M35.9 183.7C38.4 184.1 48.4 185.8 50.9 186.2" fill="none" stroke="#585858" stroke-width="1.6" stroke-linecap="round" stroke-linejoin="round"/>
<path d="M109.5 77.0C111.6 77.0 113.0 72.2 115.7 71.5C118.4 70.8 122.4 71.5 125.7 72.7C129.0 74.0 133.2 76.2 135.7 79.0C138.2 81.7 139.4 86.0 140.7 88.9C141.9 91.8 141.1 94.3 143.2 96.4C145.2 98.5 150.0 99.7 153.1 101.4C156.3 103.1 160.0 104.1 161.9 106.4C163.7 108.7 162.5 112.8 164.4 115.1C166.2 117.4 170.0 117.4 173.1 120.1C176.2 122.8 180.4 127.4 183.1 131.3C185.8 135.3 187.2 139.6 189.3 143.8C191.4 147.9 193.7 151.7 195.5 156.3C197.4 160.8 199.4 165.8 200.5 171.2C201.6 176.6 202.0 182.9 202.0 188.7C202.0 194.5 201.6 200.7 200.5 206.1C199.4 211.5 197.6 216.1 195.5 221.1C193.5 226.1 191.0 231.5 188.1 236.1C185.1 240.6 181.8 244.4 178.1 248.5C174.3 252.7 169.8 257.5 165.6 261.0C161.5 264.5 157.7 267.4 153.1 269.7C148.6 272.0 143.2 274.1 138.2 274.7C133.2 275.3 127.4 274.3 123.2 273.5C119.1 272.6 115.5 269.9 113.2 269.7C111.0 269.5 111.2 271.8 109.5 272.2C107.8 272.6 106.4 272.8 103.3 272.2C100.2 271.6 95.0 270.1 90.8 268.5C86.6 266.8 82.5 264.7 78.3 262.2C74.2 259.7 70.0 257.0 65.9 253.5C61.7 250.0 57.6 245.6 53.4 241.0C49.2 236.5 44.7 231.5 40.9 226.1C37.2 220.7 33.9 214.4 31.0 208.6C28.0 202.8 25.1 197.0 23.5 191.2C21.8 185.4 20.8 179.1 21.0 173.7C21.2 168.3 23.1 162.9 24.7 158.8C26.4 154.6 28.7 152.5 31.0 148.8C33.2 145.0 35.9 140.0 38.4 136.3C40.9 132.6 44.3 129.7 45.9 126.3C47.6 123.0 48.0 120.1 48.4 116.4C48.8 112.6 47.6 107.2 48.4 103.9C49.2 100.6 50.9 98.9 53.4 96.4C55.9 93.9 59.6 91.0 63.4 88.9C67.1 86.8 72.5 86.2 75.8 83.9C79.2 81.7 80.4 77.3 83.3 75.2C86.2 73.1 90.0 72.1 93.3 71.5C96.6 70.8 100.6 70.6 103.3 71.5C106.0 72.4 107.4 77.0 109.5 77.0Z" fill="none" stroke="#a0a0a0" stroke-width="6.5"/>
<path d="M87.1 184.9C87.1 183.8 93.3 185.0 95.8 186.2C98.3 187.3 103.8 192.0 105.8 193.7C107.8 195.3 109.1 198.7 110.8 198.7C112.4 198.7 115.9 195.2 118.2 193.7C120.6 192.2 125.9 188.6 128.2 187.4C130.5 186.3 135.7 183.9 135.7 184.9C135.7 185.9 130.2 192.4 128.2 194.9C126.2 197.4 122.1 201.1 120.7 203.6C119.4 206.1 119.6 211.6 118.2 213.6C116.9 215.6 112.2 218.9 110.8 218.6C109.3 218.3 108.0 213.3 107.0 211.1C106.0 209.0 104.8 204.6 103.3 202.4C101.8 200.2 97.9 197.2 95.8 194.9C93.6 192.6 87.1 186.1 87.1 184.9Z" fill="#151515"/>
</g></g>
<g id="sag"><clipPath id="cs"><path d="M164.6 69.1C160.7 69.5 155.1 69.7 149.5 70.3C143.8 70.9 136.3 71.3 130.8 72.6C125.4 74.0 121.5 76.1 116.9 78.4C112.2 80.8 107.2 83.5 102.9 86.6C98.6 89.7 95.1 93.2 91.3 97.1C87.4 101.0 82.7 105.4 79.6 109.9C76.5 114.3 74.3 118.8 72.6 123.8C71.0 128.9 70.0 134.7 69.8 140.1C69.7 145.6 70.2 151.4 71.5 156.4C72.7 161.5 74.8 167.3 77.3 170.4C79.8 173.5 82.7 173.3 86.6 175.1C90.5 176.8 95.5 179.7 100.6 180.9C105.6 182.1 111.8 182.6 116.9 182.1C121.9 181.5 127.4 179.0 130.8 177.4C134.3 175.8 135.1 174.1 137.8 172.7C140.5 171.4 144.0 170.0 147.1 169.3C150.3 168.5 153.5 168.7 156.5 168.1C159.4 167.5 162.3 167.1 164.6 165.8C166.9 164.4 166.7 161.1 170.4 159.9C174.1 158.8 181.7 158.2 186.7 158.8C191.8 159.4 196.8 160.7 200.7 163.4C204.6 166.1 205.4 173.1 210.0 175.1C214.7 177.0 222.4 173.5 228.6 175.1C234.8 176.6 242.4 181.7 247.3 184.4C252.1 187.1 255.0 191.0 257.7 191.4C260.5 191.8 261.6 189.4 263.6 186.7C265.5 184.0 268.0 179.7 269.4 175.1C270.7 170.4 271.5 164.2 271.7 158.8C271.9 153.3 271.3 147.9 270.5 142.5C269.8 137.0 268.6 131.6 267.1 126.2C265.5 120.7 263.4 114.9 261.2 109.9C259.1 104.8 257.0 100.0 254.2 95.9C251.5 91.8 248.4 88.5 244.9 85.4C241.4 82.3 237.6 79.2 233.3 77.3C229.0 75.3 224.0 74.8 219.3 73.8C214.7 72.8 210.4 72.2 205.4 71.5C200.3 70.7 194.5 69.7 189.1 69.1C183.6 68.6 176.8 68.0 172.8 68.0C168.7 68.0 168.5 68.7 164.6 69.1Z"/><path d="M164.6 163.4C167.1 159.9 177.4 158.8 182.1 158.8C186.7 158.8 190.2 160.7 192.5 163.4C194.9 166.1 195.3 170.0 196.0 175.1C196.8 180.1 196.4 187.5 197.2 193.7C198.0 199.9 199.9 206.1 200.7 212.3C201.5 218.5 201.9 224.4 201.9 230.9C201.8 237.5 201.1 248.0 200.2 251.9C199.3 255.8 197.8 256.2 196.5 254.2C195.2 252.3 194.0 244.5 192.5 240.3C191.1 236.0 189.6 232.5 187.9 228.6C186.1 224.7 184.2 220.9 182.1 217.0C179.9 213.1 177.2 209.2 175.1 205.3C173.0 201.5 170.6 198.0 169.3 193.7C167.9 189.4 167.7 184.8 166.9 179.7C166.2 174.7 162.1 166.9 164.6 163.4Z"/><path d="M198.4 175.1C200.3 171.6 205.0 172.7 210.0 172.7C215.1 172.7 222.4 173.1 228.6 175.1C234.8 177.0 242.6 181.3 247.3 184.4C251.9 187.5 254.9 190.2 256.6 193.7C258.2 197.2 258.2 201.1 257.0 205.3C255.9 209.6 252.4 215.7 249.6 219.3C246.8 222.9 243.8 225.1 240.3 226.8C236.8 228.4 232.1 229.5 228.6 229.1C225.1 228.7 221.7 224.0 219.3 224.4C217.0 224.8 217.0 229.5 214.7 231.4C212.3 233.4 207.6 235.8 205.4 236.1C203.1 236.4 201.9 237.2 201.2 233.3C200.4 229.3 201.2 218.9 200.7 212.3C200.2 205.7 198.8 199.9 198.4 193.7C198.0 187.5 196.4 178.6 198.4 175.1Z"/></clipPath>
<g clip-path="url(#cs)" filter="url(#bl)">
<path d="M164.6 69.1C160.7 69.5 155.1 69.7 149.5 70.3C143.8 70.9 136.3 71.3 130.8 72.6C125.4 74.0 121.5 76.1 116.9 78.4C112.2 80.8 107.2 83.5 102.9 86.6C98.6 89.7 95.1 93.2 91.3 97.1C87.4 101.0 82.7 105.4 79.6 109.9C76.5 114.3 74.3 118.8 72.6 123.8C71.0 128.9 70.0 134.7 69.8 140.1C69.7 145.6 70.2 151.4 71.5 156.4C72.7 161.5 74.8 167.3 77.3 170.4C79.8 173.5 82.7 173.3 86.6 175.1C90.5 176.8 95.5 179.7 100.6 180.9C105.6 182.1 111.8 182.6 116.9 182.1C121.9 181.5 127.4 179.0 130.8 177.4C134.3 175.8 135.1 174.1 137.8 172.7C140.5 171.4 144.0 170.0 147.1 169.3C150.3 168.5 153.5 168.7 156.5 168.1C159.4 167.5 162.3 167.1 164.6 165.8C166.9 164.4 166.7 161.1 170.4 159.9C174.1 158.8 181.7 158.2 186.7 158.8C191.8 159.4 196.8 160.7 200.7 163.4C204.6 166.1 205.4 173.1 210.0 175.1C214.7 177.0 222.4 173.5 228.6 175.1C234.8 176.6 242.4 181.7 247.3 184.4C252.1 187.1 255.0 191.0 257.7 191.4C260.5 191.8 261.6 189.4 263.6 186.7C265.5 184.0 268.0 179.7 269.4 175.1C270.7 170.4 271.5 164.2 271.7 158.8C271.9 153.3 271.3 147.9 270.5 142.5C269.8 137.0 268.6 131.6 267.1 126.2C265.5 120.7 263.4 114.9 261.2 109.9C259.1 104.8 257.0 100.0 254.2 95.9C251.5 91.8 248.4 88.5 244.9 85.4C241.4 82.3 237.6 79.2 233.3 77.3C229.0 75.3 224.0 74.8 219.3 73.8C214.7 72.8 210.4 72.2 205.4 71.5C200.3 70.7 194.5 69.7 189.1 69.1C183.6 68.6 176.8 68.0 172.8 68.0C168.7 68.0 168.5 68.7 164.6 69.1Z" fill="#5a5a5a"/>
<path d="M191.4 100.6C194.5 95.1 213.1 89.7 224.0 91.3C234.8 92.8 248.8 100.6 256.6 109.9C264.3 119.2 269.0 135.5 270.5 147.1C272.1 158.8 271.3 174.3 265.9 179.7C260.5 185.2 247.3 181.3 237.9 179.7C228.6 178.2 216.2 175.1 210.0 170.4C203.8 165.8 201.5 159.5 200.7 151.8C199.9 144.0 206.9 132.4 205.4 123.8C203.8 115.3 188.3 106.0 191.4 100.6Z" fill="#a4a4a4"/>
<path d="M88.9 107.6C90.1 104.1 98.3 99.4 100.6 100.6C102.9 101.7 104.1 111.0 102.9 114.5C101.7 118.0 95.9 122.7 93.6 121.5C91.3 120.4 87.8 111.0 88.9 107.6Z" fill="#828282"/>
<path d="M112.2 88.9C113.8 85.8 123.5 82.7 126.2 84.3C128.9 85.8 130.1 95.1 128.5 98.2C127.0 101.3 119.6 104.4 116.9 102.9C114.2 101.3 110.7 92.0 112.2 88.9Z" fill="#828282"/>
<path d="M137.8 79.6C139.8 76.3 151.0 74.2 154.1 76.1C157.2 78.1 158.4 88.0 156.5 91.3C154.5 94.6 145.6 97.8 142.5 95.9C139.4 94.0 135.9 82.9 137.8 79.6Z" fill="#828282"/>
<path d="M77.3 130.8C78.5 127.7 86.2 127.0 88.9 128.5C91.7 130.1 94.8 137.0 93.6 140.1C92.4 143.3 84.7 148.7 82.0 147.1C79.2 145.6 76.1 133.9 77.3 130.8Z" fill="#828282"/>
<path d="M82.0 161.1C83.9 158.8 96.3 157.2 100.6 158.8C104.8 160.3 109.5 168.1 107.6 170.4C105.6 172.7 93.2 174.3 88.9 172.7C84.7 171.2 80.0 163.4 82.0 161.1Z" fill="#828282"/>
<path d="M107.6 123.8C110.3 121.5 125.8 118.8 130.8 119.2C135.9 119.6 140.5 123.8 137.8 126.2C135.1 128.5 119.6 133.5 114.6 133.2C109.5 132.8 104.8 126.2 107.6 123.8Z" fill="#828282"/>
<path d="M149.5 100.6C151.8 99.4 161.1 101.0 163.4 102.9C165.8 104.8 165.8 111.0 163.4 112.2C161.1 113.4 151.8 111.8 149.5 109.9C147.1 107.9 147.1 101.7 149.5 100.6Z" fill="#828282"/>
<path d="M172.8 75.0C174.7 71.9 184.4 71.9 186.7 75.0C189.1 78.1 188.7 90.5 186.7 93.6C184.8 96.7 177.4 96.7 175.1 93.6C172.8 90.5 170.8 78.1 172.8 75.0Z" fill="#828282"/>
<path d="M191.4 79.6C193.3 76.5 203.4 75.0 205.4 77.3C207.3 79.6 205.0 90.5 203.0 93.6C201.1 96.7 195.7 98.2 193.7 95.9C191.8 93.6 189.4 82.7 191.4 79.6Z" fill="#828282"/>
<path d="M168.1 100.6C172.0 100.2 188.3 105.2 191.4 107.6C194.5 109.9 190.6 114.1 186.7 114.5C182.8 114.9 171.2 112.2 168.1 109.9C165.0 107.6 164.2 101.0 168.1 100.6Z" fill="#828282"/>
<path d="M154.1 142.5C156.5 139.0 165.4 135.5 170.4 135.5C175.5 135.5 181.7 139.4 184.4 142.5C187.1 145.6 189.1 151.0 186.7 154.1C184.4 157.2 175.5 160.7 170.4 161.1C165.4 161.5 159.2 159.5 156.5 156.4C153.7 153.3 151.8 146.0 154.1 142.5Z" fill="#9a9a9a"/>
<path d="M130.8 140.1C131.4 138.0 133.2 134.9 137.8 133.2C142.5 131.4 151.4 129.5 158.8 129.7C166.2 129.9 177.2 132.0 182.1 134.3C186.9 136.7 187.9 141.5 187.9 143.6C187.9 145.8 186.1 148.5 182.1 147.1C178.0 145.8 168.9 137.6 163.4 135.5C158.0 133.4 153.4 133.0 149.5 134.3C145.6 135.7 142.7 141.7 140.2 143.6C137.6 145.6 135.9 146.5 134.3 146.0C132.8 145.4 130.3 142.3 130.8 140.1Z" fill="#151515"/>
<path d="M102.9 86.6C103.7 88.9 107.2 95.9 107.6 100.6C108.0 105.2 105.6 112.2 105.2 114.5" fill="none" stroke="#181818" stroke-width="2.2" stroke-linecap="round"/>
<path d="M116.9 78.4C117.7 81.0 119.2 89.9 121.5 93.6C123.9 97.3 128.9 97.5 130.8 100.6C132.8 103.7 132.8 110.3 133.2 112.2" fill="none" stroke="#181818" stroke-width="2.2" stroke-linecap="round"/>
<path d="M130.8 72.6C132.0 74.6 137.1 80.4 137.8 84.3C138.6 88.1 135.9 94.0 135.5 95.9" fill="none" stroke="#181818" stroke-width="2.2" stroke-linecap="round"/>
<path d="M149.5 70.3C149.9 72.2 149.9 79.6 151.8 81.9C153.7 84.3 159.6 83.9 161.1 84.3" fill="none" stroke="#181818" stroke-width="2.2" stroke-linecap="round"/>
<path d="M91.3 97.1C92.0 99.6 96.3 107.7 95.9 112.2C95.5 116.7 90.1 121.9 88.9 123.8" fill="none" stroke="#181818" stroke-width="2.2" stroke-linecap="round"/>
<path d="M79.6 109.9C80.8 112.2 86.2 119.6 86.6 123.8C87.0 128.1 82.7 133.5 82.0 135.5" fill="none" stroke="#181818" stroke-width="2.2" stroke-linecap="round"/>
<path d="M72.6 130.8C74.6 132.8 80.0 140.5 84.3 142.5C88.6 144.4 95.9 142.5 98.3 142.5" fill="none" stroke="#181818" stroke-width="2.2" stroke-linecap="round"/>
<path d="M75.0 156.4C77.3 156.1 83.5 153.7 88.9 154.1C94.4 154.5 104.5 158.0 107.6 158.8" fill="none" stroke="#181818" stroke-width="2.2" stroke-linecap="round"/>
<path d="M86.6 175.1C88.9 173.5 94.8 166.9 100.6 165.8C106.4 164.6 118.0 167.7 121.5 168.1" fill="none" stroke="#181818" stroke-width="2.2" stroke-linecap="round"/>
<path d="M107.6 123.8C109.9 122.7 115.7 118.4 121.5 116.9C127.4 115.3 135.1 115.1 142.5 114.5C149.9 114.0 158.4 113.0 165.8 113.4C173.1 113.8 183.2 116.3 186.7 116.9" fill="none" stroke="#181818" stroke-width="2.2" stroke-linecap="round"/>
<path d="M98.3 130.8C100.6 132.0 109.1 134.3 112.2 137.8C115.3 141.3 116.1 149.5 116.9 151.8" fill="none" stroke="#181818" stroke-width="2.2" stroke-linecap="round"/>
<path d="M172.8 68.0C172.4 70.7 169.7 79.6 170.4 84.3C171.2 88.9 176.3 94.0 177.4 95.9" fill="none" stroke="#181818" stroke-width="2.2" stroke-linecap="round"/>
<path d="M189.1 69.1C189.4 71.7 192.2 79.0 191.4 84.3C190.6 89.5 185.6 97.8 184.4 100.6" fill="none" stroke="#181818" stroke-width="2.2" stroke-linecap="round"/>
<path d="M205.4 71.5C205.0 74.0 202.2 82.5 203.0 86.6C203.8 90.7 208.8 94.4 210.0 95.9" fill="none" stroke="#181818" stroke-width="2.2" stroke-linecap="round"/>
<path d="M164.6 100.6C167.5 101.0 177.6 101.3 182.1 102.9C186.5 104.4 189.8 108.7 191.4 109.9" fill="none" stroke="#181818" stroke-width="2.2" stroke-linecap="round"/>
<path d="M220.9 119.8C226.7 115.0 242.6 112.3 250.1 114.5C257.7 116.7 262.6 126.1 266.1 133.1C269.6 140.2 271.4 149.5 271.4 157.1C271.4 164.6 271.9 173.9 266.1 178.4C260.3 182.8 244.8 185.0 236.8 183.7C228.9 182.3 221.8 177.0 218.2 170.4C214.7 163.7 215.1 152.2 215.6 143.8C216.0 135.4 215.1 124.7 220.9 119.8Z" fill="#bdbdbd"/>
<path d="M181.0 69.3C183.7 65.1 191.9 70.4 197.0 72.0C202.1 73.5 210.0 75.1 211.6 78.6C213.1 82.2 208.7 89.9 206.3 93.3C203.8 96.6 201.2 97.9 197.0 98.6C192.7 99.2 183.7 102.1 181.0 97.2C178.3 92.4 178.3 73.5 181.0 69.3Z" fill="#5c5c5c"/>
<path d="M224.9 138.5C226.4 136.0 230.0 127.4 234.2 123.8C238.4 120.3 247.5 118.3 250.1 117.2" fill="none" stroke="#ececec" stroke-width="2.6" stroke-linecap="round"/>
<path d="M236.8 141.1C238.6 138.9 244.2 131.1 247.5 127.8C250.8 124.5 255.2 122.3 256.8 121.2" fill="none" stroke="#ececec" stroke-width="2.6" stroke-linecap="round"/>
<path d="M220.9 157.1C223.1 156.0 229.8 151.8 234.2 150.4C238.6 149.1 243.9 151.1 247.5 149.1C251.0 147.1 254.1 140.2 255.5 138.5" fill="none" stroke="#ececec" stroke-width="2.6" stroke-linecap="round"/>
<path d="M255.5 159.7C256.1 157.5 257.7 147.8 259.5 146.4C261.2 145.1 265.0 150.9 266.1 151.8" fill="none" stroke="#ececec" stroke-width="2.6" stroke-linecap="round"/>
<path d="M224.9 167.7C227.5 168.2 235.7 168.6 240.8 170.4C245.9 172.1 253.0 177.0 255.5 178.4" fill="none" stroke="#ececec" stroke-width="2.6" stroke-linecap="round"/>
<path d="M260.8 133.1C261.7 134.9 265.2 142.0 266.1 143.8" fill="none" stroke="#ececec" stroke-width="2.6" stroke-linecap="round"/>
<path d="M214.2 85.3C213.9 87.0 211.4 93.0 212.2 95.9C213.1 98.8 218.3 101.5 219.6 102.6" fill="none" stroke="#d8d8d8" stroke-width="2.8" stroke-linecap="round"/>
<path d="M223.5 83.9C223.3 85.7 221.1 92.4 222.2 94.6C223.3 96.8 228.9 96.8 230.2 97.2" fill="none" stroke="#d8d8d8" stroke-width="2.8" stroke-linecap="round"/>
<path d="M234.2 86.6C234.9 87.9 237.5 93.3 238.2 94.6" fill="none" stroke="#d8d8d8" stroke-width="2.8" stroke-linecap="round"/>
<path d="M197.0 110.5C198.7 111.2 203.6 114.7 207.6 114.5C211.6 114.3 216.5 111.0 220.9 109.2C225.3 107.4 232.0 104.8 234.2 103.9" fill="none" stroke="#d8d8d8" stroke-width="2.8" stroke-linecap="round"/>
<path d="M198.3 123.8C199.8 124.5 204.3 128.0 207.6 127.8C210.9 127.6 216.5 123.4 218.2 122.5" fill="none" stroke="#d8d8d8" stroke-width="2.8" stroke-linecap="round"/>
<path d="M243.5 97.2C244.6 99.0 249.0 106.1 250.1 107.9" fill="none" stroke="#d8d8d8" stroke-width="2.8" stroke-linecap="round"/>
<path d="M191.6 107.9C191.9 109.9 192.3 116.7 193.0 119.8C193.6 122.9 195.2 125.4 195.6 126.5" fill="none" stroke="#2e2e2e" stroke-width="1.7" stroke-linecap="round"/>
<path d="M191.6 107.9C194.3 108.1 202.1 110.1 207.6 109.2C213.1 108.3 220.0 104.6 224.9 102.6C229.8 100.6 234.9 98.1 236.8 97.2" fill="none" stroke="#2e2e2e" stroke-width="1.7" stroke-linecap="round"/>
<path d="M212.9 80.0C212.0 81.7 208.9 86.6 207.6 90.6C206.3 94.6 205.4 101.7 204.9 103.9" fill="none" stroke="#2e2e2e" stroke-width="1.7" stroke-linecap="round"/>
<path d="M219.6 86.6C219.1 88.4 215.8 94.4 216.9 97.2C218.0 100.1 224.7 102.8 226.2 103.9" fill="none" stroke="#2e2e2e" stroke-width="1.7" stroke-linecap="round"/>
<path d="M224.9 93.3C226.0 94.4 229.1 98.8 231.5 99.9C234.0 101.0 237.3 100.8 239.5 99.9C241.7 99.0 243.9 95.5 244.8 94.6" fill="none" stroke="#2e2e2e" stroke-width="1.7" stroke-linecap="round"/>
<path d="M228.9 115.9C231.5 115.4 240.4 113.0 244.8 113.2C249.3 113.4 253.7 116.5 255.5 117.2" fill="none" stroke="#2e2e2e" stroke-width="1.7" stroke-linecap="round"/>
<path d="M226.2 145.1C228.0 144.2 233.7 140.2 236.8 139.8C239.9 139.3 243.5 142.0 244.8 142.5" fill="none" stroke="#2e2e2e" stroke-width="1.7" stroke-linecap="round"/>
<path d="M219.6 167.7C221.6 168.8 228.6 171.7 231.5 174.4C234.4 177.0 236.0 182.1 236.8 183.7" fill="none" stroke="#2e2e2e" stroke-width="1.7" stroke-linecap="round"/>
<path d="M250.1 118.5C251.9 118.3 259.0 117.4 260.8 117.2" fill="none" stroke="#2e2e2e" stroke-width="1.7" stroke-linecap="round"/>
<path d="M236.8 83.9C236.4 85.1 234.6 89.5 234.2 90.6" fill="none" stroke="#2e2e2e" stroke-width="1.7" stroke-linecap="round"/>
<path d="M250.1 103.9C251.0 104.6 254.6 107.2 255.5 107.9" fill="none" stroke="#2e2e2e" stroke-width="1.7" stroke-linecap="round"/>
<path d="M219.3 73.8C219.7 76.3 222.4 84.1 221.7 88.9C220.9 93.8 215.8 100.6 214.7 102.9" fill="none" stroke="#3a3a3a" stroke-width="1.6" stroke-linecap="round"/>
<path d="M200.7 112.2C203.0 111.4 210.0 107.6 214.7 107.6C219.3 107.6 226.3 111.4 228.6 112.2" fill="none" stroke="#3a3a3a" stroke-width="1.6" stroke-linecap="round"/>
<path d="M182.1 135.5C179.4 135.3 170.0 133.4 165.8 134.3C161.5 135.3 158.6 138.0 156.5 141.3C154.3 144.6 153.5 152.0 153.0 154.1" fill="none" stroke="#d0d0d0" stroke-width="2"/>
<path d="M119.2 175.1C121.1 174.5 127.7 172.4 130.8 171.6C134.0 170.8 136.7 170.6 137.8 170.4" fill="none" stroke="#c8c8c8" stroke-width="2.2"/>
<path d="M164.6 163.4C167.1 159.9 177.4 158.8 182.1 158.8C186.7 158.8 190.2 160.7 192.5 163.4C194.9 166.1 195.3 170.0 196.0 175.1C196.8 180.1 196.4 187.5 197.2 193.7C198.0 199.9 199.9 206.1 200.7 212.3C201.5 218.5 201.9 224.4 201.9 230.9C201.8 237.5 201.1 248.0 200.2 251.9C199.3 255.8 197.8 256.2 196.5 254.2C195.2 252.3 194.0 244.5 192.5 240.3C191.1 236.0 189.6 232.5 187.9 228.6C186.1 224.7 184.2 220.9 182.1 217.0C179.9 213.1 177.2 209.2 175.1 205.3C173.0 201.5 170.6 198.0 169.3 193.7C167.9 189.4 167.7 184.8 166.9 179.7C166.2 174.7 162.1 166.9 164.6 163.4Z" fill="#dedede"/>
<path d="M198.4 175.1C200.3 171.6 205.0 172.7 210.0 172.7C215.1 172.7 222.4 173.1 228.6 175.1C234.8 177.0 242.6 181.3 247.3 184.4C251.9 187.5 254.9 190.2 256.6 193.7C258.2 197.2 258.2 201.1 257.0 205.3C255.9 209.6 252.4 215.7 249.6 219.3C246.8 222.9 243.8 225.1 240.3 226.8C236.8 228.4 232.1 229.5 228.6 229.1C225.1 228.7 221.7 224.0 219.3 224.4C217.0 224.8 217.0 229.5 214.7 231.4C212.3 233.4 207.6 235.8 205.4 236.1C203.1 236.4 201.9 237.2 201.2 233.3C200.4 229.3 201.2 218.9 200.7 212.3C200.2 205.7 198.8 199.9 198.4 193.7C198.0 187.5 196.4 178.6 198.4 175.1Z" fill="#a8a8a8"/>
<path d="M200.7 184.4C202.2 185.9 206.1 191.4 210.0 193.7C213.9 196.0 220.1 196.8 224.0 198.4C227.9 199.9 231.7 202.2 233.3 203.0" fill="none" stroke="#f4f4f4" stroke-width="4" stroke-linecap="round"/>
<path d="M224.0 198.4C226.3 196.4 234.1 188.5 237.9 186.7C241.8 185.0 245.7 187.7 247.3 187.9" fill="none" stroke="#f0f0f0" stroke-width="2.4" stroke-linecap="round"/>
<path d="M224.0 198.4C227.1 198.0 237.4 196.0 242.6 196.0C247.8 196.0 253.3 198.0 255.4 198.4" fill="none" stroke="#f0f0f0" stroke-width="2.4" stroke-linecap="round"/>
<path d="M228.6 200.7C231.4 201.8 241.1 205.3 244.9 207.7C248.8 210.0 250.8 213.5 251.9 214.7" fill="none" stroke="#f0f0f0" stroke-width="2.4" stroke-linecap="round"/>
<path d="M228.6 201.8C230.2 204.4 236.2 213.1 237.9 217.0C239.7 220.9 238.9 223.8 239.1 225.1" fill="none" stroke="#f0f0f0" stroke-width="2.4" stroke-linecap="round"/>
<path d="M224.0 199.5C224.4 202.4 226.3 212.3 226.3 217.0C226.3 221.6 224.4 225.7 224.0 227.5" fill="none" stroke="#f0f0f0" stroke-width="2.4" stroke-linecap="round"/>
<path d="M214.7 194.9C216.2 193.1 221.7 187.1 224.0 184.4C226.3 181.7 227.9 179.5 228.6 178.6" fill="none" stroke="#f0f0f0" stroke-width="2.4" stroke-linecap="round"/>
<path d="M210.0 193.7C210.0 196.8 210.4 206.1 210.0 212.3C209.6 218.5 208.1 227.8 207.7 230.9" fill="none" stroke="#f0f0f0" stroke-width="2.4" stroke-linecap="round"/>
<path d="M233.3 180.9C232.5 183.0 229.4 191.6 228.6 193.7" fill="none" stroke="#505050" stroke-width="1.3" stroke-linecap="round"/>
<path d="M247.3 185.5C245.7 187.3 239.5 194.3 237.9 196.0" fill="none" stroke="#505050" stroke-width="1.3" stroke-linecap="round"/>
<path d="M256.1 205.3C253.5 205.0 242.9 203.4 240.3 203.0" fill="none" stroke="#505050" stroke-width="1.3" stroke-linecap="round"/>
<path d="M247.3 220.5C245.3 218.3 237.6 209.8 235.6 207.7" fill="none" stroke="#505050" stroke-width="1.3" stroke-linecap="round"/>
<path d="M232.1 228.6C231.7 225.9 230.2 215.0 229.8 212.3" fill="none" stroke="#505050" stroke-width="1.3" stroke-linecap="round"/>
<path d="M219.3 225.1C219.7 222.2 221.3 210.6 221.7 207.7" fill="none" stroke="#505050" stroke-width="1.3" stroke-linecap="round"/>
<path d="M212.3 232.1C212.5 227.3 213.3 207.9 213.5 203.0" fill="none" stroke="#505050" stroke-width="1.3" stroke-linecap="round"/>
<path d="M198.4 163.4C200.3 165.2 205.0 171.9 210.0 173.9C215.1 175.9 222.4 173.8 228.6 175.5C234.8 177.3 242.2 181.4 247.3 184.4C252.3 187.3 257.0 191.8 258.9 193.2" fill="none" stroke="#101010" stroke-width="2.6" stroke-linecap="round"/>
<path d="M182.1 149.5C183.6 148.3 196.0 149.5 200.7 151.8C205.4 154.1 210.0 161.1 210.0 163.4C210.0 165.8 203.8 166.5 200.7 165.8C197.6 165.0 194.5 161.5 191.4 158.8C188.3 156.1 180.5 150.6 182.1 149.5Z" fill="#1c1c1c"/>
<path d="M197.2 175.1C197.8 178.2 200.0 187.5 200.7 193.7C201.4 199.9 201.1 209.2 201.2 212.3" fill="none" stroke="#1a1a1a" stroke-width="2.5"/>
</g>
<path d="M120.4 140.6C120.8 138.3 122.1 134.5 125.0 132.0C128.0 129.5 134.4 125.5 140.2 123.8C145.9 122.2 156.3 120.9 163.4 121.1C170.6 121.2 182.4 122.8 187.9 125.0C193.4 127.2 198.2 132.3 200.2 135.5C202.3 138.6 202.1 143.7 201.6 146.0C201.2 148.2 198.8 150.0 197.2 150.6C195.6 151.2 192.2 151.0 190.9 149.9C189.6 148.9 189.7 145.8 188.6 143.6C187.4 141.5 186.7 137.5 183.2 135.5C179.8 133.5 170.8 131.2 165.8 130.4C160.7 129.5 153.8 129.1 149.5 129.7C145.1 130.3 139.5 132.4 136.7 134.3C133.8 136.2 131.5 140.5 130.4 142.5C129.2 144.5 130.2 146.8 129.0 147.6C127.7 148.4 123.3 148.6 122.0 147.6C120.7 146.5 119.9 143.0 120.4 140.6Z" fill="#f6f6f6" filter="url(#bl2)"/></g>
</defs></svg>
<div id="win">
 <div id="title">
  <div class="tl" style="left:8px;background:#e5705f;border:1px solid #d35a4a"></div>
  <div class="tl" style="left:28px;background:#f0bd3c;border:1px solid #d9a42e"></div>
  <div class="tl" style="left:48px;background:#6fc24b;border:1px solid #57a93a"></div>
  <div id="ttext">/Users/yeunkim/Downloads/NITP2016_BrainSuiteTutorial 2/structural/2523412.bfc.nii.gz</div>
 </div>
 <div id="tool"></div>

 <!-- panel 1 -->
 <div class="lbl" style="left:18px;top:67px">64 128 128</div>
 <div class="lbl" style="left:132px;top:67px">1.28906</div>
 <div class="groove" style="left:6px;top:83px;height:329px"></div>
 <div class="fill" style="left:6px;top:246px;height:166px"></div>
 <div class="knob" style="left:0px;top:238.7px"></div>
 <div class="img" id="p1" style="left:18px;top:84px;width:219px;height:330px"><svg class="abs" style="left:0;top:0" width="219" height="330"><use href="#cor"/></svg><svg class="ov" style="left:0;top:0" width="219" height="330"><rect x="109" y="0" width="1" height="331" fill="#0000ff"/><rect x="0" y="165" width="220" height="1" fill="#0000ff"/><text x="108.7" y="14" text-anchor="middle">S</text><text x="108.8" y="324" text-anchor="middle">I</text><text x="5.3" y="169">R</text><text x="205" y="169">L</text></svg></div>

 <!-- panel 2 -->
 <div class="lbl" style="left:533px;top:67px">64 128 128</div>
 <div class="lbl" style="left:647px;top:67px">1.28906</div>
 <div class="groove" style="left:521px;top:83px;height:329px"></div>
 <div class="fill" style="left:521px;top:246px;height:166px"></div>
 <div class="knob" style="left:515px;top:238.7px"></div>
 <div class="img" id="p2" style="left:533px;top:84px;width:330px;height:330px"><svg class="abs" style="left:0;top:0" width="330" height="330"><use href="#sag"/></svg><svg class="ov" style="left:0;top:0" width="330" height="330"><rect x="165" y="0" width="1" height="331" fill="#ffff00"/><rect x="0" y="165" width="331" height="1" fill="#ffff00"/><text x="164.7" y="14" text-anchor="middle">S</text><text x="164.8" y="324" text-anchor="middle">I</text><text x="5.3" y="169">A</text><text x="316" y="169">P</text></svg></div>

 <!-- panel 3 -->
 <div class="lbl" style="left:18px;top:422px">64 128 128</div>
 <div class="lbl" style="left:132px;top:422px">1.28906</div>
 <div class="groove" style="left:6px;top:438px;height:327.5px"></div>
 <div class="fill" style="left:6px;top:601px;height:164.5px"></div>
 <div class="knob" style="left:0px;top:593.7px"></div>
 <div class="img" id="p3" style="left:18px;top:439px;width:219px;height:330px"><svg class="abs" style="left:0;top:0" width="219" height="330"><use href="#axi"/></svg><svg class="ov" style="left:0;top:0" width="219" height="330"><rect x="109" y="0" width="1" height="331" fill="#0000ff"/><rect x="0" y="165" width="220" height="1" fill="#0000ff"/><text x="108.7" y="14" text-anchor="middle">A</text><text x="108.8" y="324" text-anchor="middle">P</text><text x="5.3" y="169">R</text><text x="205" y="169">L</text></svg></div>

 <!-- panel 4 -->
 <div class="abs" id="p4" style="left:515px;top:421px;width:509px;height:348px;background:#908ec8;overflow:hidden">
   <div class="abs" style="left:137px;top:0;width:237px;height:348px;background:#000"></div>
   <svg class="abs" style="left:0;top:0" width="509" height="348"><g transform="translate(137,-3.7) scale(1.077)"><use href="#cor"/></g><rect x="254" y="0" width="1" height="348" fill="#0000ff"/></svg>
 </div>

 <div id="status"><div class="lbl" style="left:6px;top:1px;letter-spacing:0.2px">V: 279.737</div></div>
</div>
<svg class="abs" style="left:0;top:0" width="1136" height="100">
<defs>
<filter id="spk" x="-10%" y="-10%" width="120%" height="120%" color-interpolation-filters="sRGB"><feTurbulence type="fractalNoise" baseFrequency="0.55" numOctaves="2" seed="7" result="n"/><feColorMatrix in="n" type="matrix" values="1.6 0 0 0 0.1  1.6 0 0 0 0.1  1.2 0 0 0 0.35  0 0 0 0 1" result="m"/><feComposite in="SourceGraphic" in2="m" operator="arithmetic" k1="1" k2="0" k3="0" k4="0" result="c"/><feGaussianBlur in="c" stdDeviation="0.35"/></filter>
<path id="blob" d="M-12.3 1.2C-12.3 -0.1 -12.2 -2.3 -11.4 -3.8C-10.7 -5.3 -9.4 -6.6 -7.9 -7.6C-6.4 -8.6 -4.4 -9.4 -2.5 -9.9C-0.5 -10.3 1.8 -10.4 3.7 -10.0C5.6 -9.6 7.6 -8.6 9.0 -7.5C10.4 -6.3 11.5 -4.5 12.1 -3.1C12.7 -1.7 12.8 -0.2 12.6 1.1C12.4 2.3 11.8 3.5 10.9 4.6C10.0 5.7 8.4 6.8 7.4 7.7C6.4 8.5 5.6 9.4 4.8 9.9C3.9 10.3 2.8 10.6 2.1 10.4C1.4 10.2 0.5 9.3 0.4 8.7C0.4 8.1 1.9 7.0 1.6 6.9C1.2 6.8 -0.4 7.8 -1.6 8.1C-2.8 8.4 -4.5 8.8 -5.8 8.6C-7.1 8.4 -8.4 7.7 -9.3 7.0C-10.3 6.2 -11.0 5.3 -11.5 4.3C-12.0 3.4 -12.3 2.6 -12.3 1.2Z" fill="#6c6ce6" filter="url(#spk)"/>
<filter id="ib" x="-10%" y="-10%" width="120%" height="120%" color-interpolation-filters="sRGB"><feGaussianBlur stdDeviation="0.5" result="b"/><feTurbulence type="fractalNoise" baseFrequency="0.35" numOctaves="2" seed="9" result="n"/><feColorMatrix in="n" type="matrix" values="1.3 0 0 0 0.3  1.3 0 0 0 0.3  1.3 0 0 0 0.3  0 0 0 0 1" result="m"/><feComposite in="b" in2="m" operator="arithmetic" k1="1" k2="0" k3="0" k4="0"/></filter>
</defs>
<rect x="63" y="62" width="2" height="2" fill="#9a9a9a"/>
<rect x="63" y="68" width="2" height="2" fill="#9a9a9a"/>
<rect x="63" y="74" width="2" height="2" fill="#9a9a9a"/>
<rect x="63" y="80" width="2" height="2" fill="#9a9a9a"/>
<rect x="63" y="86" width="2" height="2" fill="#9a9a9a"/>
<line x1="116.5" y1="56" x2="116.5" y2="96" stroke="#4a4a4a" stroke-width="1" stroke-dasharray="1 2"/>
<line x1="310.5" y1="56" x2="310.5" y2="96" stroke="#4a4a4a" stroke-width="1" stroke-dasharray="1 2"/>
<line x1="366.5" y1="56" x2="366.5" y2="96" stroke="#4a4a4a" stroke-width="1" stroke-dasharray="1 2"/>
<line x1="606.5" y1="56" x2="606.5" y2="96" stroke="#4a4a4a" stroke-width="1" stroke-dasharray="1 2"/>
<rect x="75.3" y="68.2" width="28" height="8" fill="#d9b85a"/>
<rect x="76.2" y="62" width="25.2" height="12.5" fill="#000"/>
<path d="M80.4 74.5 A8.6 10 0 0 1 97.6 74.5Z" fill="#8a8a8a" filter="url(#ib)"/>
<path d="M73.2 72.2 L81.8 72.2 L83.2 74 L105 74 L103.2 91.7 L75.3 91.7Z" fill="#e2c265"/>
<path d="M78.2 59.7 L83 64 L80.2 64 L80.2 67 L76.2 67 L76.2 64 L73.4 64Z" fill="#00c000"/>
<rect x="134.5" y="65" width="23.5" height="23.4" fill="#c4c4c4"/>
<rect x="135" y="65.6" width="22.3" height="6.6" fill="#2e2e2e"/>
<rect x="135" y="67.7" width="22.3" height="2.5" fill="#707070"/>
<rect x="135.1" y="72.8" width="3.2" height="15.2" fill="#9c9c9c"/>
<rect x="135.95" y="72.8" width="1.5" height="15.2" fill="#383838"/>
<rect x="138.8" y="72.8" width="3.2" height="15.2" fill="#9c9c9c"/>
<rect x="139.65" y="72.8" width="1.5" height="15.2" fill="#383838"/>
<rect x="142.3" y="72.8" width="3.2" height="15.2" fill="#9c9c9c"/>
<rect x="143.15" y="72.8" width="1.5" height="15.2" fill="#383838"/>
<rect x="146.0" y="72.8" width="3.2" height="15.2" fill="#9c9c9c"/>
<rect x="146.85" y="72.8" width="1.5" height="15.2" fill="#383838"/>
<rect x="149.65" y="72.8" width="3.2" height="15.2" fill="#9c9c9c"/>
<rect x="150.5" y="72.8" width="1.5" height="15.2" fill="#383838"/>
<rect x="153.3" y="72.8" width="3.2" height="15.2" fill="#9c9c9c"/>
<rect x="154.15" y="72.8" width="1.5" height="15.2" fill="#383838"/>
<path d="M178.1 63.2 L190.9 68.1 L203.6 62.8 L203.2 83.9 L190.9 89.9 L179 83.9Z" fill="#000"/>
<path d="M182.1 70.3 L186.9 72 L187.3 73.8 L184.7 73.4Z" fill="#fff"/>
<path d="M200.5 69.8 L195.7 72 L195.3 73.8 L197.9 72.9Z" fill="#fff"/>
<rect x="221" y="60" width="32" height="32" fill="#9390cb"/>
<rect x="222.2" y="62.0" width="1.2" height="1.6" fill="#902848" opacity="0.8"/>
<rect x="224.7" y="62.2" width="3" height="1.2" fill="#20b040" opacity="0.85"/>
<rect x="228.2" y="62.2" width="3" height="1.2" fill="#4060e0" opacity="0.85"/>
<rect x="231.6" y="62.2" width="3" height="1.2" fill="#28c048" opacity="0.85"/>
<rect x="235.0" y="62.2" width="3" height="1.2" fill="#28c048" opacity="0.85"/>
<rect x="238.5" y="62.2" width="3" height="1.2" fill="#38d058" opacity="0.85"/>
<rect x="241.9" y="62.2" width="3" height="1.2" fill="#28c048" opacity="0.85"/>
<rect x="245.3" y="62.2" width="3" height="1.2" fill="#38d058" opacity="0.85"/>
<rect x="248.7" y="62.2" width="3" height="1.2" fill="#28c048" opacity="0.85"/>
<rect x="222.2" y="65.4" width="1.2" height="1.6" fill="#902848" opacity="0.8"/>
<rect x="224.7" y="65.6" width="3" height="1.2" fill="#28c048" opacity="0.85"/>
<rect x="228.2" y="65.6" width="3" height="1.2" fill="#38d058" opacity="0.85"/>
<rect x="231.6" y="65.6" width="3" height="1.2" fill="#28c048" opacity="0.85"/>
<rect x="235.0" y="65.6" width="3" height="1.2" fill="#4060e0" opacity="0.85"/>
<rect x="238.5" y="65.6" width="3" height="1.2" fill="#28c048" opacity="0.85"/>
<rect x="241.9" y="65.6" width="3" height="1.2" fill="#4060e0" opacity="0.85"/>
<rect x="245.3" y="65.6" width="3" height="1.2" fill="#38d058" opacity="0.85"/>
<rect x="248.7" y="65.6" width="3" height="1.2" fill="#28c048" opacity="0.85"/>
<rect x="222.2" y="68.8" width="1.2" height="1.6" fill="#b02040" opacity="0.8"/>
<rect x="224.7" y="69.0" width="3" height="1.2" fill="#28c048" opacity="0.85"/>
<rect x="228.2" y="69.0" width="3" height="1.2" fill="#20b040" opacity="0.85"/>
<rect x="231.6" y="69.0" width="3" height="1.2" fill="#38d058" opacity="0.85"/>
<rect x="235.0" y="69.0" width="3" height="1.2" fill="#28c048" opacity="0.85"/>
<rect x="238.5" y="69.0" width="3" height="1.2" fill="#38d058" opacity="0.85"/>
<rect x="241.9" y="69.0" width="3" height="1.2" fill="#28c048" opacity="0.85"/>
<rect x="245.3" y="69.0" width="3" height="1.2" fill="#38d058" opacity="0.85"/>
<rect x="248.7" y="69.0" width="3" height="1.2" fill="#4060e0" opacity="0.85"/>
<rect x="221.3" y="72.4" width="3" height="1.2" fill="#4060e0" opacity="0.85"/>
<rect x="224.7" y="72.4" width="3" height="1.2" fill="#28c048" opacity="0.85"/>
<rect x="228.2" y="72.4" width="3" height="1.2" fill="#38d058" opacity="0.85"/>
<rect x="232.5" y="72.2" width="1.2" height="1.6" fill="#a01838" opacity="0.8"/>
<rect x="235.9" y="72.2" width="1.2" height="1.6" fill="#a01838" opacity="0.8"/>
<rect x="239.4" y="72.2" width="1.2" height="1.6" fill="#a01838" opacity="0.8"/>
<rect x="242.8" y="72.2" width="1.2" height="1.6" fill="#a01838" opacity="0.8"/>
<rect x="246.2" y="72.2" width="1.2" height="1.6" fill="#a01838" opacity="0.8"/>
<rect x="249.6" y="72.2" width="1.2" height="1.6" fill="#a01838" opacity="0.8"/>
<rect x="222.2" y="75.6" width="1.2" height="1.6" fill="#b02040" opacity="0.8"/>
<rect x="225.6" y="75.6" width="1.2" height="1.6" fill="#b02040" opacity="0.8"/>
<rect x="229.1" y="75.6" width="1.2" height="1.6" fill="#b02040" opacity="0.8"/>
<rect x="232.5" y="75.6" width="1.2" height="1.6" fill="#a01838" opacity="0.8"/>
<rect x="235.9" y="75.6" width="1.2" height="1.6" fill="#902848" opacity="0.8"/>
<rect x="239.4" y="75.6" width="1.2" height="1.6" fill="#902848" opacity="0.8"/>
<rect x="242.8" y="75.6" width="1.2" height="1.6" fill="#902848" opacity="0.8"/>
<rect x="246.2" y="75.6" width="1.2" height="1.6" fill="#a01838" opacity="0.8"/>
<rect x="249.6" y="75.6" width="1.2" height="1.6" fill="#a01838" opacity="0.8"/>
<rect x="222.2" y="79.0" width="1.2" height="1.6" fill="#b02040" opacity="0.8"/>
<rect x="225.6" y="79.0" width="1.2" height="1.6" fill="#b02040" opacity="0.8"/>
<rect x="229.1" y="79.0" width="1.2" height="1.6" fill="#b02040" opacity="0.8"/>
<rect x="232.5" y="79.0" width="1.2" height="1.6" fill="#a01838" opacity="0.8"/>
<rect x="235.9" y="79.0" width="1.2" height="1.6" fill="#b02040" opacity="0.8"/>
<rect x="239.4" y="79.0" width="1.2" height="1.6" fill="#b02040" opacity="0.8"/>
<rect x="242.8" y="79.0" width="1.2" height="1.6" fill="#a01838" opacity="0.8"/>
<rect x="246.2" y="79.0" width="1.2" height="1.6" fill="#a01838" opacity="0.8"/>
<rect x="249.6" y="79.0" width="1.2" height="1.6" fill="#b02040" opacity="0.8"/>
<rect x="222.2" y="82.5" width="1.2" height="1.6" fill="#a01838" opacity="0.8"/>
<rect x="225.6" y="82.5" width="1.2" height="1.6" fill="#b02040" opacity="0.8"/>
<rect x="229.1" y="82.5" width="1.2" height="1.6" fill="#b02040" opacity="0.8"/>
<rect x="232.5" y="82.5" width="1.2" height="1.6" fill="#902848" opacity="0.8"/>
<rect x="235.0" y="82.7" width="3" height="1.2" fill="#20b040" opacity="0.85"/>
<rect x="238.5" y="82.7" width="3" height="1.2" fill="#28c048" opacity="0.85"/>
<rect x="241.9" y="82.7" width="3" height="1.2" fill="#20b040" opacity="0.85"/>
<rect x="245.3" y="82.7" width="3" height="1.2" fill="#20b040" opacity="0.85"/>
<rect x="248.7" y="82.7" width="3" height="1.2" fill="#20b040" opacity="0.85"/>
<rect x="222.2" y="85.9" width="1.2" height="1.6" fill="#902848" opacity="0.8"/>
<rect x="225.6" y="85.9" width="1.2" height="1.6" fill="#a01838" opacity="0.8"/>
<rect x="229.1" y="85.9" width="1.2" height="1.6" fill="#b02040" opacity="0.8"/>
<rect x="231.6" y="86.1" width="3" height="1.2" fill="#38d058" opacity="0.85"/>
<rect x="235.0" y="86.1" width="3" height="1.2" fill="#38d058" opacity="0.85"/>
<rect x="238.5" y="86.1" width="3" height="1.2" fill="#38d058" opacity="0.85"/>
<rect x="241.9" y="86.1" width="3" height="1.2" fill="#20b040" opacity="0.85"/>
<rect x="245.3" y="86.1" width="3" height="1.2" fill="#38d058" opacity="0.85"/>
<rect x="248.7" y="86.1" width="3" height="1.2" fill="#28c048" opacity="0.85"/>
<rect x="222.2" y="89.3" width="1.2" height="1.6" fill="#3848c8" opacity="0.8"/>
<rect x="225.6" y="89.3" width="1.2" height="1.6" fill="#b02040" opacity="0.8"/>
<rect x="228.2" y="89.5" width="3" height="1.2" fill="#20b040" opacity="0.85"/>
<rect x="231.6" y="89.5" width="3" height="1.2" fill="#28c048" opacity="0.85"/>
<rect x="235.0" y="89.5" width="3" height="1.2" fill="#28c048" opacity="0.85"/>
<rect x="238.5" y="89.5" width="3" height="1.2" fill="#38d058" opacity="0.85"/>
<rect x="241.9" y="89.5" width="3" height="1.2" fill="#28c048" opacity="0.85"/>
<rect x="245.3" y="89.5" width="3" height="1.2" fill="#20b040" opacity="0.85"/>
<rect x="248.7" y="89.5" width="3" height="1.2" fill="#38d058" opacity="0.85"/>
<path d="M270.7 65.4C270.9 65.7 271.6 66.5 271.6 67.2C271.6 67.9 270.6 69.0 270.7 69.8C270.8 70.6 272.4 71.2 272.5 72.0C272.6 72.8 271.8 74.2 271.6 74.7" fill="none" stroke="#c4e01c" stroke-width="1.5" stroke-linecap="round"/>
<path d="M276.9 74.2C277.1 73.5 277.7 71.2 278.2 69.8C278.7 68.4 279.1 66.6 280.0 65.9C280.9 65.2 282.6 65.6 283.9 65.4C285.2 65.2 287.2 64.7 287.9 64.6" fill="none" stroke="#ff22d2" stroke-width="1.5" stroke-linecap="round"/>
<path d="M289.0 68.1C289.1 68.7 289.4 70.3 289.7 71.6C290.0 72.8 290.8 74.9 291.0 75.6" fill="none" stroke="#2262ff" stroke-width="1.5" stroke-linecap="round"/>
<path d="M271.4 85.9C271.9 85.7 274.0 85.7 274.7 84.8C275.4 83.9 274.8 81.7 275.6 80.4C276.4 79.2 278.9 77.8 279.5 77.3" fill="none" stroke="#148224" stroke-width="1.5" stroke-linecap="round"/>
<path d="M283.2 84.1C283.5 83.3 283.8 80.5 284.8 79.5C285.8 78.5 287.6 78.5 289.2 77.8C290.8 77.1 293.3 75.5 294.1 75.1" fill="none" stroke="#741434" stroke-width="1.5" stroke-linecap="round"/>
<path d="M290.3 87.6C290.4 87.1 290.3 85.5 290.8 84.8C291.3 84.1 292.6 84.1 293.2 83.5C293.8 82.9 294.4 81.7 294.7 81.3" fill="none" stroke="#f05412" stroke-width="1.5" stroke-linecap="round"/>
<rect x="327.5" y="60.5" width="27.5" height="27.5" fill="#dcdcdc" stroke="#b4b4b4" stroke-width="1"/>
<rect x="327.5" y="60.5" width="27.5" height="2" fill="#e8e8e8"/>
<rect x="323.5" y="64.5" width="27.5" height="27.5" fill="#e0e0e0" stroke="#b0b0b0" stroke-width="1"/>
<use href="#blob" transform="translate(336.8,77.6) scale(0.87)"/>
<rect x="379" y="60" width="32" height="14.7" fill="#000"/><rect x="379" y="74.7" width="14.6" height="17.3" fill="#000"/>
<g filter="url(#ib)"><ellipse cx="385.8" cy="67.8" rx="5.6" ry="6.6" fill="#5e5e5e"/><path d="M395.5 73 C395 64 400 61 404 61.5 C409 62 410.5 68 410 73 L404 74 L400 72Z" fill="#5a5a5a"/><ellipse cx="386" cy="83.5" rx="5.8" ry="7.4" fill="#626262"/><rect x="381" y="72.2" width="10" height="1.8" fill="#9a9a9a"/><rect x="396" y="72" width="13" height="1.6" fill="#6a6a6a"/></g>
<line x1="393.6" y1="60" x2="393.6" y2="74.5" stroke="#444" stroke-width="0.6"/>
<use href="#blob" transform="translate(402.8,83.2) scale(0.52)"/>
<use href="#blob" transform="translate(441.1,75.8)"/>
<line x1="431.8" y1="66.6" x2="428.3" y2="63.4" stroke="#000" stroke-width="1"/>
<path d="M425.0 60.2 L429.7 62.0 L427.0 64.7Z" fill="#000"/>
<line x1="450.2" y1="66.6" x2="453.7" y2="63.4" stroke="#000" stroke-width="1"/>
<path d="M457.0 60.2 L455.0 64.7 L452.3 62.0Z" fill="#000"/>
<line x1="431.8" y1="85.5" x2="428.3" y2="88.7" stroke="#000" stroke-width="1"/>
<path d="M425.0 91.9 L427.0 87.4 L429.7 90.1Z" fill="#000"/>
<line x1="450.2" y1="85.5" x2="453.7" y2="88.7" stroke="#000" stroke-width="1"/>
<path d="M457.0 91.9 L452.3 90.1 L455.0 87.4Z" fill="#000"/>
<rect x="471" y="63" width="32" height="27" fill="#000"/>
<g filter="url(#ib)"><path d="M476.5 90 L476 78 C476 68 481 64.5 487 64.5 C493 64.5 498 68 498 78 L497.5 90Z" fill="#5c5c5c"/><path d="M476.5 89 L476 78 C476 68 481 64.5 487 64.5 C493 64.5 498 68 498 78 L497.5 89" fill="none" stroke="#8a8a8a" stroke-width="0.8"/><path d="M484.5 73.5 L487 77 L489.5 73.5 L487 75Z" fill="#222" stroke="#222" stroke-width="0.8"/><rect x="485.6" y="82.5" width="3" height="2.4" fill="#e8e8e8"/><rect x="485.8" y="85" width="2.6" height="5" fill="#111"/><rect x="477" y="83" width="1.6" height="6" fill="#a0a0a0"/><rect x="495.4" y="83" width="1.6" height="6" fill="#a0a0a0"/></g>
<rect x="517" y="63" width="32" height="27" fill="#000"/>
<g filter="url(#ib)"><path d="M519.5 82 C519 70 526 64.5 534.5 64.5 C543 64.5 548.5 71 548 80 C548 85 546 88 543 90 L531 90 L529 84 L523 83.5Z" fill="#5a5a5a"/><path d="M519.8 81 C519.5 70 526 64.8 534.5 64.8 C543 64.8 548.3 71 547.8 80" fill="none" stroke="#909090" stroke-width="0.8"/><path d="M526 78 C526 72 530 70.5 533.5 70.5 C537 70.5 539 73 539 76" fill="none" stroke="#9a9a9a" stroke-width="1.6"/><path d="M531.5 82 L535.5 90 L538.5 90 L535 80Z" fill="#7a7a7a"/><path d="M518 86 L528 84.5 L530 90 L518 90Z" fill="#3a3a3a"/><rect x="530" y="82" width="2.6" height="2" fill="#d8d8d8"/><path d="M541 88.5 L546 86" stroke="#b0b0b0" stroke-width="1.2"/></g>
<rect x="563" y="60" width="32" height="32" fill="#000"/>
<g filter="url(#ib)"><ellipse cx="579" cy="76.2" rx="10.6" ry="13.6" fill="#5e5e5e" transform="rotate(-6 579 76.2)"/><ellipse cx="579" cy="76.2" rx="10.6" ry="13.6" fill="none" stroke="#8c8c8c" stroke-width="0.8" transform="rotate(-6 579 76.2)"/><path d="M576.3 70.6 L578.4 72.4 L580.5 70.6 L579.6 74 L578.4 72.8 L577.2 74Z" fill="#222" stroke="#222" stroke-width="0.8"/><path d="M575.2 80.4 L578.4 78 L581.8 80.4" fill="none" stroke="#1e1e1e" stroke-width="1.5"/></g>
<circle cx="635" cy="75.9" r="15.6" fill="none" stroke="#111" stroke-width="1.2"/>
<use href="#blob" transform="translate(635.4,75.6) scale(0.89)"/>
<path d="M650 66.2 L645.6 65.6 L647.2 69.6Z" fill="#000" stroke="#000" stroke-width="0.6"/>
<path d="M620 85.8 L624.4 86.2 L622.6 82.2Z" fill="#000" stroke="#000" stroke-width="0.6"/>
<path d="M287.8 35.8 L295.2 35.8 L298.8 39.4 L298.8 50.3 L287.8 50.3Z" fill="#fff" stroke="#a8a8a8" stroke-width="0.8"/>
<path d="M295.2 35.8 L295.2 39.4 L298.8 39.4" fill="#eee" stroke="#a8a8a8" stroke-width="0.7"/>
<line x1="293" y1="36.2" x2="293" y2="46" stroke="#222" stroke-width="1.5" stroke-dasharray="1.1 0.5"/>
</svg>
</body></html>
